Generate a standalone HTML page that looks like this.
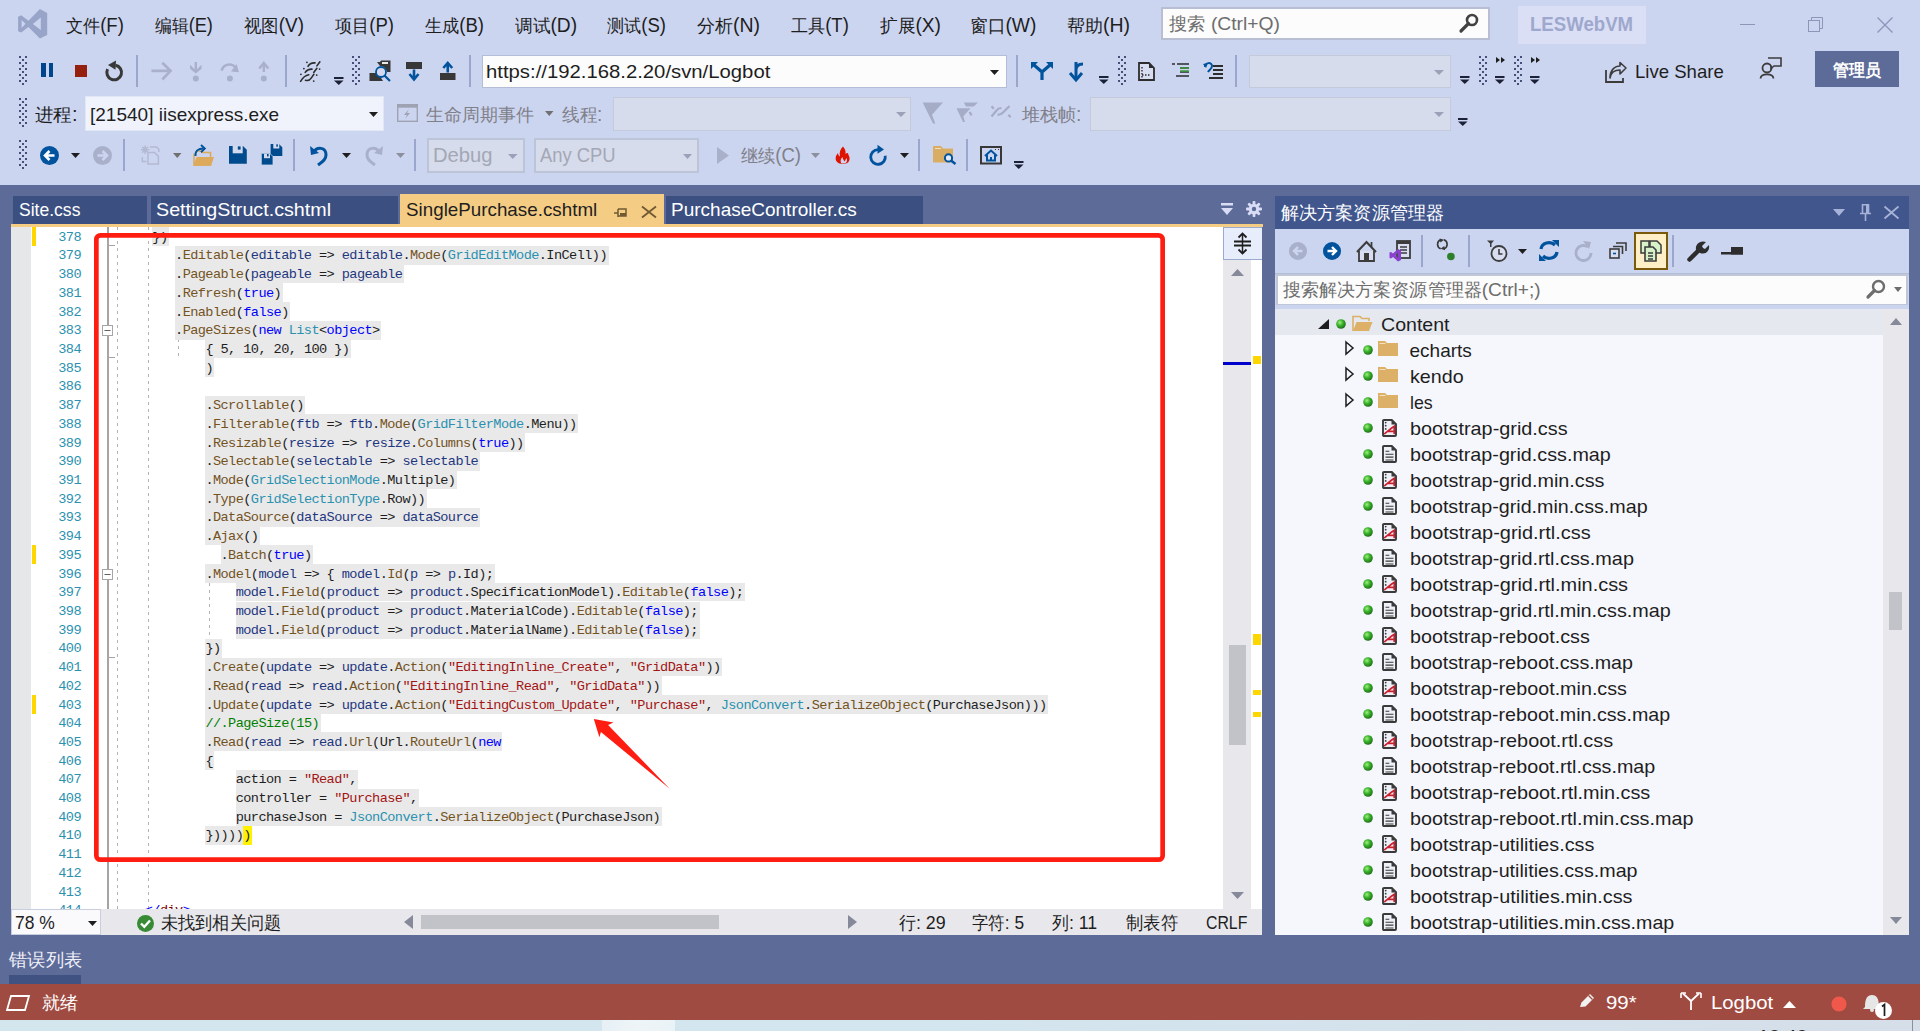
<!DOCTYPE html>
<html><head><meta charset="utf-8">
<style>
*{margin:0;padding:0;box-sizing:border-box}
html,body{width:1920px;height:1031px;overflow:hidden;background:#5D6B99;font-family:"Liberation Sans",sans-serif;position:relative}
.a{position:absolute}
.tx{white-space:pre;transform-origin:0 0}
svg{overflow:visible}
.code{font-family:'Liberation Mono',monospace;font-size:13.6px;line-height:14px;letter-spacing:-0.58px;white-space:pre;color:#1E1E1E}
.ln{color:#2B91AF;text-align:right}
</style></head><body>
<div class="a" style="left:0px;top:0px;width:1920px;height:185px;background:#CCD5F0;"></div>
<svg class="a" style="left:0px;top:0px;" width="50" height="44" viewBox="0 0 50 44"><path d="M39.9 9 L47.2 12.9 L47.2 35 L39.9 38.5 L28.4 27.1 L21.2 32.5 L18.1 31.2 L18.1 16.8 L21.2 15.2 L28.4 20.7 Z M40.8 17.6 L40.8 30 L32.9 24 Z M21.6 19.9 L25.5 23.8 L21.6 27.9 Z" fill="#98A5C9" fill-rule="evenodd"/></svg>
<div class="a tx" style="left:66.00px;top:15.89px;font-size:19.5px;line-height:19.5px;color:#1E1E1E;font-family:'Liberation Sans',sans-serif;font-weight:400;transform:scaleX(0.9500);"><span style="font-size:0.93em">文件</span>(F)</div>
<div class="a tx" style="left:155.00px;top:15.89px;font-size:19.5px;line-height:19.5px;color:#1E1E1E;font-family:'Liberation Sans',sans-serif;font-weight:400;transform:scaleX(0.9344);"><span style="font-size:0.93em">编辑</span>(E)</div>
<div class="a tx" style="left:244.00px;top:15.89px;font-size:19.5px;line-height:19.5px;color:#1E1E1E;font-family:'Liberation Sans',sans-serif;font-weight:400;transform:scaleX(0.9672);"><span style="font-size:0.93em">视图</span>(V)</div>
<div class="a tx" style="left:335.00px;top:15.89px;font-size:19.5px;line-height:19.5px;color:#1E1E1E;font-family:'Liberation Sans',sans-serif;font-weight:400;transform:scaleX(0.9508);"><span style="font-size:0.93em">项目</span>(P)</div>
<div class="a tx" style="left:425.00px;top:15.89px;font-size:19.5px;line-height:19.5px;color:#1E1E1E;font-family:'Liberation Sans',sans-serif;font-weight:400;transform:scaleX(0.9508);"><span style="font-size:0.93em">生成</span>(B)</div>
<div class="a tx" style="left:515.00px;top:15.89px;font-size:19.5px;line-height:19.5px;color:#1E1E1E;font-family:'Liberation Sans',sans-serif;font-weight:400;transform:scaleX(0.9839);"><span style="font-size:0.93em">调试</span>(D)</div>
<div class="a tx" style="left:607.00px;top:15.89px;font-size:19.5px;line-height:19.5px;color:#1E1E1E;font-family:'Liberation Sans',sans-serif;font-weight:400;transform:scaleX(0.9508);"><span style="font-size:0.93em">测试</span>(S)</div>
<div class="a tx" style="left:697.00px;top:15.89px;font-size:19.5px;line-height:19.5px;color:#1E1E1E;font-family:'Liberation Sans',sans-serif;font-weight:400;transform:scaleX(1.0000);"><span style="font-size:0.93em">分析</span>(N)</div>
<div class="a tx" style="left:791.00px;top:15.89px;font-size:19.5px;line-height:19.5px;color:#1E1E1E;font-family:'Liberation Sans',sans-serif;font-weight:400;transform:scaleX(0.9500);"><span style="font-size:0.93em">工具</span>(T)</div>
<div class="a tx" style="left:880.00px;top:15.89px;font-size:19.5px;line-height:19.5px;color:#1E1E1E;font-family:'Liberation Sans',sans-serif;font-weight:400;transform:scaleX(0.9836);"><span style="font-size:0.93em">扩展</span>(X)</div>
<div class="a tx" style="left:970.02px;top:15.89px;font-size:19.5px;line-height:19.5px;color:#1E1E1E;font-family:'Liberation Sans',sans-serif;font-weight:400;transform:scaleX(0.9848);"><span style="font-size:0.93em">窗口</span>(W)</div>
<div class="a tx" style="left:1067.00px;top:15.89px;font-size:19.5px;line-height:19.5px;color:#1E1E1E;font-family:'Liberation Sans',sans-serif;font-weight:400;transform:scaleX(1.0000);"><span style="font-size:0.93em">帮助</span>(H)</div>
<div class="a" style="left:1161px;top:7px;width:329px;height:33px;background:#FCFCFC;border:2px solid #B8BFD2"></div>
<div class="a tx" style="left:1169.00px;top:14.42px;font-size:19px;line-height:19px;color:#6D6D6D;font-family:'Liberation Sans',sans-serif;font-weight:400;transform:scaleX(1.0147);"><span style="font-size:0.93em">搜索</span> (Ctrl+Q)</div>
<svg class="a" style="left:1459px;top:13px;" width="20" height="20" viewBox="0 0 20 20"><circle cx="13" cy="7" r="5" fill="none" stroke="#424242" stroke-width="2.6"/><path d="M9.5 10.5 L2 18" stroke="#424242" stroke-width="3.2" stroke-linecap="round"/></svg>
<div class="a" style="left:1518px;top:6px;width:128px;height:38px;background:#DADFF6;"></div>
<div class="a tx" style="left:1530.35px;top:15.49px;font-size:19.5px;line-height:19.5px;color:#9EA8CC;font-family:'Liberation Sans',sans-serif;font-weight:700;transform:scaleX(0.9547);">LESWebVM</div>
<div class="a" style="left:1740px;top:24px;width:15px;height:1px;background:#8D96B8;"></div>
<svg class="a" style="left:1808px;top:17px;" width="16" height="16" viewBox="0 0 16 16"><rect x="0.5" y="3.5" width="11" height="11" fill="none" stroke="#8D96B8"/><path d="M3.5 3.5 V0.5 H14.5 V11.5 H11.5" fill="none" stroke="#8D96B8"/></svg>
<svg class="a" style="left:1877px;top:17px;" width="16" height="16" viewBox="0 0 16 16"><path d="M0.5 0.5 L15.5 15.5 M15.5 0.5 L0.5 15.5" stroke="#8D96B8" stroke-width="1.4"/></svg>
<svg class="a" style="left:19px;top:56px;" width="8" height="29" viewBox="0 0 8 29"><rect x="0" y="0" width="2" height="2" fill="#474E7A"/><rect x="6" y="0" width="2" height="2" fill="#474E7A"/><rect x="3" y="3" width="2" height="2" fill="#474E7A"/><rect x="0" y="6" width="2" height="2" fill="#474E7A"/><rect x="6" y="6" width="2" height="2" fill="#474E7A"/><rect x="3" y="9" width="2" height="2" fill="#474E7A"/><rect x="0" y="12" width="2" height="2" fill="#474E7A"/><rect x="6" y="12" width="2" height="2" fill="#474E7A"/><rect x="3" y="15" width="2" height="2" fill="#474E7A"/><rect x="0" y="18" width="2" height="2" fill="#474E7A"/><rect x="6" y="18" width="2" height="2" fill="#474E7A"/><rect x="3" y="21" width="2" height="2" fill="#474E7A"/><rect x="0" y="24" width="2" height="2" fill="#474E7A"/><rect x="6" y="24" width="2" height="2" fill="#474E7A"/><rect x="3" y="27" width="2" height="2" fill="#474E7A"/></svg>
<div class="a" style="left:41px;top:63px;width:4.5px;height:14px;background:#00468C;"></div>
<div class="a" style="left:48.5px;top:63px;width:4.5px;height:14px;background:#00468C;"></div>
<div class="a" style="left:75px;top:65px;width:12px;height:12px;background:#962010;"></div>
<svg class="a" style="left:105px;top:59px;" width="20" height="24" viewBox="0 0 20 24"><path d="M10.5 6.25 A7.35 7.35 0 1 1 2.6 10.2" fill="none" stroke="#383838" stroke-width="3"/><path d="M3 6 L11 1.5 L10.5 10.7 Z" fill="#383838"/></svg>
<div class="a" style="left:136px;top:55px;width:2px;height:32px;background:#9AA6CB;"></div>
<svg class="a" style="left:145px;top:55px;" width="30" height="30" viewBox="0 0 30 30"><path d="M6.4 15.9 H25 M17.3 7.8 L25.6 15.9 L17.3 24.5" fill="none" stroke="#A9B0CA" stroke-width="2.6"/></svg>
<svg class="a" style="left:185px;top:55px;" width="22" height="30" viewBox="0 0 22 30"><path d="M10.8 7 V15" stroke="#A9B0CA" stroke-width="2.4"/><path d="M5.8 11.5 L10.8 16.5 L15.8 11.5 L15.8 13.5 L10.8 17.5 L5.8 13.5 Z" fill="#A9B0CA" stroke="#A9B0CA" stroke-width="1.5"/><circle cx="10.8" cy="23.6" r="3" fill="#A9B0CA"/></svg>
<svg class="a" style="left:215px;top:55px;" width="30" height="30" viewBox="0 0 30 30"><path d="M6.5 15.6 C8 11 11.5 9.5 14.6 9.5 C17 9.5 19 10.5 20.5 12.5" fill="none" stroke="#A9B0CA" stroke-width="2.6"/><path d="M21.6 9 L23.9 17.3 L16 16.5 Z" fill="#A9B0CA"/><circle cx="14.9" cy="23.6" r="3" fill="#A9B0CA"/></svg>
<svg class="a" style="left:255px;top:55px;" width="18" height="30" viewBox="0 0 18 30"><path d="M8.8 17 V9" stroke="#A9B0CA" stroke-width="2.4"/><path d="M4.3 13.5 L8.8 8 L13.3 13.5" fill="none" stroke="#A9B0CA" stroke-width="2.6"/><circle cx="8.8" cy="23.6" r="3" fill="#A9B0CA"/></svg>
<div class="a" style="left:285px;top:55px;width:2px;height:32px;background:#9AA6CB;"></div>
<svg class="a" style="left:296px;top:58px;" width="28" height="28" viewBox="0 0 28 28"><g fill="none" stroke="#2D2D2D" stroke-width="1.6" stroke-linecap="round"><path d="M12 8.4 Q14 4.6 19 4.9"/><path d="M9.2 14.4 Q11.5 10.9 16 11.1"/><path d="M4.6 23.4 Q8 17.5 12.8 16.8"/><path d="M20.9 7.9 L23.9 3.8"/><path d="M17.7 14.4 L20.9 10.3"/><path d="M9.5 22.3 Q13 23.3 15.2 20.1 L17.9 16.3"/></g><g fill="#2D2D2D"><circle cx="10.9" cy="4.3" r="0.9"/><circle cx="7.9" cy="10.6" r="0.9"/><circle cx="4.9" cy="16.3" r="0.9"/><circle cx="23.6" cy="11.1" r="0.9"/><circle cx="20.7" cy="17.1" r="0.9"/><circle cx="17.7" cy="23.1" r="0.9"/></g></svg>
<svg class="a" style="left:334px;top:77px;" width="10" height="9" viewBox="0 0 10 9"><rect x="0" y="0" width="9.5" height="2" fill="#1B2137"/><path d="M0 3.5 L9.5 3.5 L4.75 8 Z" fill="#1B2137"/></svg>
<svg class="a" style="left:352px;top:56px;" width="8" height="29" viewBox="0 0 8 29"><rect x="0" y="0" width="2" height="2" fill="#474E7A"/><rect x="6" y="0" width="2" height="2" fill="#474E7A"/><rect x="3" y="3" width="2" height="2" fill="#474E7A"/><rect x="0" y="6" width="2" height="2" fill="#474E7A"/><rect x="6" y="6" width="2" height="2" fill="#474E7A"/><rect x="3" y="9" width="2" height="2" fill="#474E7A"/><rect x="0" y="12" width="2" height="2" fill="#474E7A"/><rect x="6" y="12" width="2" height="2" fill="#474E7A"/><rect x="3" y="15" width="2" height="2" fill="#474E7A"/><rect x="0" y="18" width="2" height="2" fill="#474E7A"/><rect x="6" y="18" width="2" height="2" fill="#474E7A"/><rect x="3" y="21" width="2" height="2" fill="#474E7A"/><rect x="0" y="24" width="2" height="2" fill="#474E7A"/><rect x="6" y="24" width="2" height="2" fill="#474E7A"/><rect x="3" y="27" width="2" height="2" fill="#474E7A"/></svg>
<svg class="a" style="left:369px;top:60px;" width="23" height="23" viewBox="0 0 23 23"><path d="M0.5 13 H9 L14 21 H0.5 Z" fill="#383838"/><path d="M8 2 H11 L12 0.5 H21.5 V12 L18 12 C17 8 14 6 11 6 Z" fill="#383838"/><rect x="13" y="2" width="6" height="2" fill="#E8E8E8"/><circle cx="12" cy="12" r="5" fill="#D5D8EE" stroke="#00539C" stroke-width="1.8"/><path d="M15.5 15.5 L21 21" stroke="#00539C" stroke-width="2.2"/></svg>
<svg class="a" style="left:406px;top:62px;" width="16" height="19" viewBox="0 0 16 19"><rect x="0" y="0" width="16" height="7" fill="#383838"/><path d="M8 7.5 V17 M3.5 12 L8 17.5 L12.5 12" fill="none" stroke="#00539C" stroke-width="2.6"/></svg>
<svg class="a" style="left:440px;top:62px;" width="16" height="18" viewBox="0 0 16 18"><rect x="0" y="11" width="15.5" height="7" fill="#383838"/><path d="M7.75 10.5 V1.5 M3.3 6 L7.75 1 L12.2 6" fill="none" stroke="#00539C" stroke-width="2.6"/></svg>
<div class="a" style="left:469px;top:55px;width:2px;height:32px;background:#9AA6CB;"></div>
<div class="a" style="left:482px;top:55px;width:525px;height:33px;background:#FCFCFC;border:1px solid #B4BCD6"></div>
<div class="a tx" style="left:485.90px;top:62.84px;font-size:18.5px;line-height:18.5px;color:#1E1E1E;font-family:'Liberation Sans',sans-serif;font-weight:400;transform:scaleX(1.0969);">https://192.168.2.20/svn/Logbot</div>
<svg class="a" style="left:990px;top:70px;" width="9" height="5" viewBox="0 0 9 5"><path d="M0 0 L9 0 L4.5 5 Z" fill="#1E1E1E"/></svg>
<div class="a" style="left:1016px;top:55px;width:2px;height:32px;background:#9AA6CB;"></div>
<svg class="a" style="left:1031px;top:62px;" width="22" height="19" viewBox="0 0 22 19"><path d="M11 18 V10 L3 3 M11 10 L19 3" fill="none" stroke="#00539C" stroke-width="3.2"/><path d="M0 0 H7 L0 7 Z M22 0 H15 L22 7 Z" fill="#00539C"/></svg>
<svg class="a" style="left:1069px;top:61px;" width="16" height="21" viewBox="0 0 16 21"><path d="M7 1 V18 M7 9 C7 4 10 3 14 3" fill="none" stroke="#00539C" stroke-width="3"/><path d="M1 12 L7 19 L13 12" fill="none" stroke="#00539C" stroke-width="3"/></svg>
<svg class="a" style="left:1099px;top:76px;" width="10" height="9" viewBox="0 0 10 9"><rect x="0" y="0" width="9.5" height="2" fill="#1B2137"/><path d="M0 3.5 L9.5 3.5 L4.75 8 Z" fill="#1B2137"/></svg>
<svg class="a" style="left:1118px;top:56px;" width="8" height="29" viewBox="0 0 8 29"><rect x="0" y="0" width="2" height="2" fill="#474E7A"/><rect x="6" y="0" width="2" height="2" fill="#474E7A"/><rect x="3" y="3" width="2" height="2" fill="#474E7A"/><rect x="0" y="6" width="2" height="2" fill="#474E7A"/><rect x="6" y="6" width="2" height="2" fill="#474E7A"/><rect x="3" y="9" width="2" height="2" fill="#474E7A"/><rect x="0" y="12" width="2" height="2" fill="#474E7A"/><rect x="6" y="12" width="2" height="2" fill="#474E7A"/><rect x="3" y="15" width="2" height="2" fill="#474E7A"/><rect x="0" y="18" width="2" height="2" fill="#474E7A"/><rect x="6" y="18" width="2" height="2" fill="#474E7A"/><rect x="3" y="21" width="2" height="2" fill="#474E7A"/><rect x="0" y="24" width="2" height="2" fill="#474E7A"/><rect x="6" y="24" width="2" height="2" fill="#474E7A"/><rect x="3" y="27" width="2" height="2" fill="#474E7A"/></svg>
<svg class="a" style="left:1138px;top:62px;" width="17" height="19" viewBox="0 0 17 19"><path d="M1 1 H11 L16 6 V18 H1 Z" fill="#D9DDF0" stroke="#2D2D2D" stroke-width="1.8"/><path d="M11 1 L16 6 H11Z" fill="#2D2D2D"/><path d="M4 5 V16 M4 13 H13" stroke="#2D2D2D" stroke-width="1.4" stroke-dasharray="1.5 1.5"/></svg>
<svg class="a" style="left:1172px;top:63px;" width="17" height="15" viewBox="0 0 17 15"><path d="M0 1 H3 M5 1 H17 M8 5 H17 M8 9 H17 M4 13 H17" stroke="#2D2D2D" stroke-width="1.6"/><path d="M8 5 H17 M8 8 H17" stroke="#3C9A3C" stroke-width="1.6"/></svg>
<svg class="a" style="left:1203px;top:62px;" width="20" height="19" viewBox="0 0 20 19"><path d="M2 5 C2 0 9 0 9 4 C9 7 6 8 5 10" fill="none" stroke="#00539C" stroke-width="2"/><path d="M0 2 L3 6 L5 1Z" fill="#00539C"/><path d="M10 4 H20 M10 8 H20 M10 12 H20 M6 16 H20" stroke="#2D2D2D" stroke-width="1.8"/></svg>
<div class="a" style="left:1235px;top:55px;width:2px;height:32px;background:#9AA6CB;"></div>
<div class="a" style="left:1249px;top:55px;width:202px;height:33px;background:#D6DCEB;border:1px solid #C3CADC"></div>
<svg class="a" style="left:1434px;top:70px;" width="10" height="5" viewBox="0 0 10 5"><path d="M0 0 L10 0 L5.0 5 Z" fill="#9BA1B8"/></svg>
<svg class="a" style="left:1460px;top:76px;" width="10" height="9" viewBox="0 0 10 9"><rect x="0" y="0" width="9.5" height="2" fill="#1B2137"/><path d="M0 3.5 L9.5 3.5 L4.75 8 Z" fill="#1B2137"/></svg>
<svg class="a" style="left:1479px;top:56px;" width="8" height="29" viewBox="0 0 8 29"><rect x="0" y="0" width="2" height="2" fill="#474E7A"/><rect x="6" y="0" width="2" height="2" fill="#474E7A"/><rect x="3" y="3" width="2" height="2" fill="#474E7A"/><rect x="0" y="6" width="2" height="2" fill="#474E7A"/><rect x="6" y="6" width="2" height="2" fill="#474E7A"/><rect x="3" y="9" width="2" height="2" fill="#474E7A"/><rect x="0" y="12" width="2" height="2" fill="#474E7A"/><rect x="6" y="12" width="2" height="2" fill="#474E7A"/><rect x="3" y="15" width="2" height="2" fill="#474E7A"/><rect x="0" y="18" width="2" height="2" fill="#474E7A"/><rect x="6" y="18" width="2" height="2" fill="#474E7A"/><rect x="3" y="21" width="2" height="2" fill="#474E7A"/><rect x="0" y="24" width="2" height="2" fill="#474E7A"/><rect x="6" y="24" width="2" height="2" fill="#474E7A"/><rect x="3" y="27" width="2" height="2" fill="#474E7A"/></svg>
<svg class="a" style="left:1496px;top:57px;" width="10" height="6" viewBox="0 0 10 6"><path d="M0 0 L4 3 L0 6Z M5 0 L9 3 L5 6Z" fill="#1E1E1E"/></svg>
<svg class="a" style="left:1495px;top:76px;" width="10" height="9" viewBox="0 0 10 9"><rect x="0" y="0" width="9.5" height="2" fill="#1B2137"/><path d="M0 3.5 L9.5 3.5 L4.75 8 Z" fill="#1B2137"/></svg>
<svg class="a" style="left:1514px;top:56px;" width="8" height="29" viewBox="0 0 8 29"><rect x="0" y="0" width="2" height="2" fill="#474E7A"/><rect x="6" y="0" width="2" height="2" fill="#474E7A"/><rect x="3" y="3" width="2" height="2" fill="#474E7A"/><rect x="0" y="6" width="2" height="2" fill="#474E7A"/><rect x="6" y="6" width="2" height="2" fill="#474E7A"/><rect x="3" y="9" width="2" height="2" fill="#474E7A"/><rect x="0" y="12" width="2" height="2" fill="#474E7A"/><rect x="6" y="12" width="2" height="2" fill="#474E7A"/><rect x="3" y="15" width="2" height="2" fill="#474E7A"/><rect x="0" y="18" width="2" height="2" fill="#474E7A"/><rect x="6" y="18" width="2" height="2" fill="#474E7A"/><rect x="3" y="21" width="2" height="2" fill="#474E7A"/><rect x="0" y="24" width="2" height="2" fill="#474E7A"/><rect x="6" y="24" width="2" height="2" fill="#474E7A"/><rect x="3" y="27" width="2" height="2" fill="#474E7A"/></svg>
<svg class="a" style="left:1531px;top:57px;" width="10" height="6" viewBox="0 0 10 6"><path d="M0 0 L4 3 L0 6Z M5 0 L9 3 L5 6Z" fill="#1E1E1E"/></svg>
<svg class="a" style="left:1530px;top:76px;" width="10" height="9" viewBox="0 0 10 9"><rect x="0" y="0" width="9.5" height="2" fill="#1B2137"/><path d="M0 3.5 L9.5 3.5 L4.75 8 Z" fill="#1B2137"/></svg>
<svg class="a" style="left:1605px;top:62px;" width="23" height="21" viewBox="0 0 23 21"><path d="M1 8 V20 H18 V16" fill="none" stroke="#3C3C3C" stroke-width="1.8"/><path d="M5 16 C6 10 10 8 15 8 V12 L21 6 L15 0.5 V4 C9 4 5 9 5 16 Z" fill="none" stroke="#3C3C3C" stroke-width="1.6" stroke-linejoin="round"/></svg>
<div class="a tx" style="left:1635.02px;top:62.42px;font-size:19px;line-height:19px;color:#1E1E1E;font-family:'Liberation Sans',sans-serif;font-weight:400;transform:scaleX(0.9775);">Live Share</div>
<svg class="a" style="left:1760px;top:57px;" width="22" height="22" viewBox="0 0 22 22"><circle cx="7" cy="11" r="4.5" fill="none" stroke="#3C3C3C" stroke-width="1.8"/><path d="M0.5 21.5 C1 16 13 16 13.5 21.5" fill="none" stroke="#3C3C3C" stroke-width="1.8"/><path d="M8 1 H21 V9 H14 L11 11.5 V9" fill="none" stroke="#3C3C3C" stroke-width="1.6"/></svg>
<div class="a" style="left:1815px;top:51px;width:84px;height:36px;background:#5D6B99;"></div>
<div class="a tx" style="left:1833.00px;top:60.84px;font-size:18.5px;line-height:18.5px;color:#FFFFFF;font-family:'Liberation Sans',sans-serif;font-weight:700;transform:scaleX(0.9412);"><span style="font-size:0.93em">管理员</span></div>
<svg class="a" style="left:19px;top:98px;" width="8" height="29" viewBox="0 0 8 29"><rect x="0" y="0" width="2" height="2" fill="#474E7A"/><rect x="6" y="0" width="2" height="2" fill="#474E7A"/><rect x="3" y="3" width="2" height="2" fill="#474E7A"/><rect x="0" y="6" width="2" height="2" fill="#474E7A"/><rect x="6" y="6" width="2" height="2" fill="#474E7A"/><rect x="3" y="9" width="2" height="2" fill="#474E7A"/><rect x="0" y="12" width="2" height="2" fill="#474E7A"/><rect x="6" y="12" width="2" height="2" fill="#474E7A"/><rect x="3" y="15" width="2" height="2" fill="#474E7A"/><rect x="0" y="18" width="2" height="2" fill="#474E7A"/><rect x="6" y="18" width="2" height="2" fill="#474E7A"/><rect x="3" y="21" width="2" height="2" fill="#474E7A"/><rect x="0" y="24" width="2" height="2" fill="#474E7A"/><rect x="6" y="24" width="2" height="2" fill="#474E7A"/><rect x="3" y="27" width="2" height="2" fill="#474E7A"/></svg>
<div class="a tx" style="left:35.00px;top:104.99px;font-size:19.5px;line-height:19.5px;color:#1E1E1E;font-family:'Liberation Sans',sans-serif;font-weight:400;transform:scaleX(1.0250);"><span style="font-size:0.93em">进程</span>:</div>
<div class="a" style="left:85px;top:96px;width:299px;height:35px;background:#F0F3FC;border:1px solid #E2E7F6"></div>
<div class="a tx" style="left:89.97px;top:105.84px;font-size:18.5px;line-height:18.5px;color:#1E1E1E;font-family:'Liberation Sans',sans-serif;font-weight:400;transform:scaleX(1.0273);">[21540] iisexpress.exe</div>
<svg class="a" style="left:369px;top:112px;" width="9" height="5" viewBox="0 0 9 5"><path d="M0 0 L9 0 L4.5 5 Z" fill="#1E1E1E"/></svg>
<svg class="a" style="left:397px;top:104px;" width="21" height="18" viewBox="0 0 21 18"><rect x="0.7" y="0.7" width="19.6" height="16.6" fill="none" stroke="#9EA2B2" stroke-width="1.4"/><rect x="0.7" y="0.7" width="19.6" height="3" fill="#9EA2B2"/><path d="M12 5 L7 11 H10 L8 15 L13 9 H10 Z" fill="#9EA2B2"/></svg>
<div class="a tx" style="left:426.00px;top:104.99px;font-size:19.5px;line-height:19.5px;color:#7F8089;font-family:'Liberation Sans',sans-serif;font-weight:400;transform:scaleX(1.0000);"><span style="font-size:0.93em">生命周期事件</span></div>
<svg class="a" style="left:544.5px;top:111px;" width="8.5" height="5" viewBox="0 0 8.5 5"><path d="M0 0 L8.5 0 L4.25 5 Z" fill="#707070"/></svg>
<div class="a tx" style="left:562.00px;top:104.99px;font-size:19.5px;line-height:19.5px;color:#7F8089;font-family:'Liberation Sans',sans-serif;font-weight:400;transform:scaleX(0.9750);"><span style="font-size:0.93em">线程</span>:</div>
<div class="a" style="left:613px;top:97px;width:298px;height:34px;background:#D6DCEB;border:1px solid #C3CADC"></div>
<svg class="a" style="left:896px;top:112px;" width="10" height="5" viewBox="0 0 10 5"><path d="M0 0 L10 0 L5.0 5 Z" fill="#9BA1B8"/></svg>
<svg class="a" style="left:918px;top:98px;" width="100" height="30" viewBox="0 0 100 30"><g fill="#A5ACC5"><path d="M4.7 4.4 H25 L14 16.7 L17.3 25.5 H15 Z"/><path d="M45.8 4.4 H59.9 L55.7 8.6 H48 Z"/><path d="M38.5 10.2 H52.6 L45.3 18.2 L47 24 H45 Z"/></g><g fill="none" stroke="#A5ACC5" stroke-width="2.2"><path d="M51.6 14 L53.6 17.4"/><path d="M73.5 18.5 L78.5 12.5 Q80 10.2 83.5 10"/><path d="M79.5 16.8 Q83 16.8 85 14.5 L91.5 8"/><path d="M73.5 8.2 L75.8 10.8"/><path d="M90.5 16.8 L92.6 19.3"/></g></svg>
<div class="a tx" style="left:1022.00px;top:104.99px;font-size:19.5px;line-height:19.5px;color:#7F8089;font-family:'Liberation Sans',sans-serif;font-weight:400;transform:scaleX(1.0000);"><span style="font-size:0.93em">堆栈帧</span>:</div>
<div class="a" style="left:1090px;top:97px;width:361px;height:34px;background:#D6DCEB;border:1px solid #C3CADC"></div>
<svg class="a" style="left:1434px;top:112px;" width="10" height="5" viewBox="0 0 10 5"><path d="M0 0 L10 0 L5.0 5 Z" fill="#9BA1B8"/></svg>
<svg class="a" style="left:1458px;top:118px;" width="10" height="9" viewBox="0 0 10 9"><rect x="0" y="0" width="9.5" height="2" fill="#1B2137"/><path d="M0 3.5 L9.5 3.5 L4.75 8 Z" fill="#1B2137"/></svg>
<svg class="a" style="left:19px;top:140px;" width="8" height="29" viewBox="0 0 8 29"><rect x="0" y="0" width="2" height="2" fill="#474E7A"/><rect x="6" y="0" width="2" height="2" fill="#474E7A"/><rect x="3" y="3" width="2" height="2" fill="#474E7A"/><rect x="0" y="6" width="2" height="2" fill="#474E7A"/><rect x="6" y="6" width="2" height="2" fill="#474E7A"/><rect x="3" y="9" width="2" height="2" fill="#474E7A"/><rect x="0" y="12" width="2" height="2" fill="#474E7A"/><rect x="6" y="12" width="2" height="2" fill="#474E7A"/><rect x="3" y="15" width="2" height="2" fill="#474E7A"/><rect x="0" y="18" width="2" height="2" fill="#474E7A"/><rect x="6" y="18" width="2" height="2" fill="#474E7A"/><rect x="3" y="21" width="2" height="2" fill="#474E7A"/><rect x="0" y="24" width="2" height="2" fill="#474E7A"/><rect x="6" y="24" width="2" height="2" fill="#474E7A"/><rect x="3" y="27" width="2" height="2" fill="#474E7A"/></svg>
<svg class="a" style="left:40px;top:146px;" width="19" height="19" viewBox="0 0 19 19"><circle cx="9.5" cy="9.5" r="9.5" fill="#00539C"/><path d="M14.5 9.5 H6 M9.5 5 L5 9.5 L9.5 14" fill="none" stroke="#FFFFFF" stroke-width="2.6"/></svg>
<svg class="a" style="left:71px;top:153px;" width="9" height="5" viewBox="0 0 9 5"><path d="M0 0 L9 0 L4.5 5 Z" fill="#1E1E1E"/></svg>
<svg class="a" style="left:93px;top:146px;" width="19" height="19" viewBox="0 0 19 19"><circle cx="9.5" cy="9.5" r="9.5" fill="#A9B0CA"/><path d="M4.5 9.5 H13 M9.5 5 L14 9.5 L9.5 14" fill="none" stroke="#CCD5F0" stroke-width="2.6"/></svg>
<div class="a" style="left:123px;top:139px;width:2px;height:32px;background:#9AA6CB;"></div>
<svg class="a" style="left:135px;top:140px;" width="30" height="30" viewBox="0 0 30 30"><g fill="none" stroke="#B3B9D0" stroke-width="1.5"><path d="M10.1 5.5 V13.9 M5.9 9.7 H14.3 M7.1 6.7 L13.1 12.7 M13.1 6.7 L7.1 12.7"/><path d="M15 7 H21.5 L23.8 9.3 V12"/><path d="M7.3 17 V21.5 H11.5"/><path d="M13 12.5 H19.5 L23.4 16.4 V23.9 H13 Z"/></g></svg>
<svg class="a" style="left:173.3px;top:153px;" width="8.5" height="5" viewBox="0 0 8.5 5"><path d="M0 0 L8.5 0 L4.25 5 Z" fill="#707070"/></svg>
<svg class="a" style="left:193px;top:144px;" width="22" height="23" viewBox="0 0 22 23"><path d="M1 9.5 V21 H17.5 V8.5 H9.5 L8 7 H3" fill="none" stroke="#DCAA5A" stroke-width="1.6"/><path d="M0.5 21.7 L3.5 13 H21 L18 21.7 Z" fill="#DCAA5A"/><path d="M2.5 12 C2 7 5 4.5 10.5 4.5" fill="none" stroke="#00539C" stroke-width="1.9"/><path d="M8 1 L11.8 4.6 L8 8.2" fill="none" stroke="#00539C" stroke-width="1.9"/></svg>
<svg class="a" style="left:229px;top:146px;" width="18" height="18" viewBox="0 0 18 18"><path d="M0 0 H14 L17.8 3.8 V17.8 H0 Z" fill="#004B8D"/><rect x="3.7" y="0" width="10" height="7.3" fill="#D5D9EE"/><rect x="8.8" y="0.4" width="2.8" height="3.2" fill="#004B8D"/></svg>
<svg class="a" style="left:261px;top:144px;" width="22" height="22" viewBox="0 0 22 22"><path d="M9.6 0 H18 L21.3 3.3 V12.1 H9.6 Z" fill="#004B8D"/><rect x="12.3" y="0" width="6" height="4.5" fill="#D5D9EE"/><rect x="15.3" y="0.3" width="1.6" height="2.4" fill="#004B8D"/><path d="M0.3 9.3 H8.8 L12 12.5 V21 H0.3 Z" fill="#004B8D" stroke="#CCD5F0" stroke-width="0.8"/><rect x="3" y="9.7" width="6" height="4.5" fill="#D5D9EE"/><rect x="6" y="10" width="1.6" height="2.4" fill="#004B8D"/></svg>
<div class="a" style="left:293px;top:139px;width:2px;height:32px;background:#9AA6CB;"></div>
<svg class="a" style="left:310px;top:144px;" width="20" height="22" viewBox="0 0 20 22"><path d="M3 9 C7 2 16 3 16 11 C16 16 12 18 8 21" fill="none" stroke="#00539C" stroke-width="3"/><path d="M0 2 L1 11 L9 9 Z" fill="#00539C"/></svg>
<svg class="a" style="left:342px;top:153px;" width="9" height="5" viewBox="0 0 9 5"><path d="M0 0 L9 0 L4.5 5 Z" fill="#1E1E1E"/></svg>
<svg class="a" style="left:364px;top:144px;" width="19" height="22" viewBox="0 0 19 22"><path d="M16 9 C12 2 3 3 3 11 C3 16 7 18 11 21" fill="none" stroke="#A9B0CA" stroke-width="3"/><path d="M19 2 L18 11 L10 9 Z" fill="#A9B0CA"/></svg>
<svg class="a" style="left:396px;top:153px;" width="9" height="5" viewBox="0 0 9 5"><path d="M0 0 L9 0 L4.5 5 Z" fill="#8C8F9C"/></svg>
<div class="a" style="left:414px;top:139px;width:2px;height:32px;background:#9AA6CB;"></div>
<div class="a" style="left:427px;top:138px;width:98px;height:35px;background:#D6DCEB;border:2px solid #BCC4D8"></div>
<div class="a tx" style="left:432.96px;top:146.49px;font-size:19.5px;line-height:19.5px;color:#A4A7B5;font-family:'Liberation Sans',sans-serif;font-weight:400;transform:scaleX(1.0364);">Debug</div>
<svg class="a" style="left:508px;top:154px;" width="9.5" height="5" viewBox="0 0 9.5 5"><path d="M0 0 L9.5 0 L4.75 5 Z" fill="#9BA1B8"/></svg>
<div class="a" style="left:534px;top:138px;width:165px;height:35px;background:#D6DCEB;border:2px solid #BCC4D8"></div>
<div class="a tx" style="left:540.00px;top:146.49px;font-size:19.5px;line-height:19.5px;color:#A4A7B5;font-family:'Liberation Sans',sans-serif;font-weight:400;transform:scaleX(0.9430);">Any CPU</div>
<svg class="a" style="left:683px;top:154px;" width="9" height="5" viewBox="0 0 9 5"><path d="M0 0 L9 0 L4.5 5 Z" fill="#9BA1B8"/></svg>
<svg class="a" style="left:717px;top:147px;" width="12" height="17" viewBox="0 0 12 17"><path d="M0 0 L12 8.5 L0 17 Z" fill="#A9B0CA"/></svg>
<div class="a tx" style="left:741.00px;top:146.49px;font-size:19.5px;line-height:19.5px;color:#7F8089;font-family:'Liberation Sans',sans-serif;font-weight:400;transform:scaleX(0.9516);"><span style="font-size:0.93em">继续</span>(C)</div>
<svg class="a" style="left:811px;top:153px;" width="9" height="5" viewBox="0 0 9 5"><path d="M0 0 L9 0 L4.5 5 Z" fill="#8C8F9C"/></svg>
<svg class="a" style="left:835px;top:146px;" width="16" height="19" viewBox="0 0 16 19"><path d="M8 0.5 C10 3 11 5 10.5 8 C12 7 13 6 13.5 9 C15 11 15 14 13.5 16 C12 17.5 10 18 8 18 C5 18 2 17 1 14.5 C0 12 1 9 3 7 C3 9 4 10 5 10.5 C4 7 5 3 8 0.5 Z" fill="#E01200"/><path d="M6.5 17.5 C5 15.5 5.5 13 7.5 11 C7.5 13 9 14 9.5 15.5 C10.5 14 11 13 11.5 12 C12.5 14 12 16.5 10 17.5 Z" fill="#CCD5F0"/></svg>
<svg class="a" style="left:868px;top:144px;" width="20" height="23" viewBox="0 0 20 23"><path d="M10 5.7 A7.3 7.3 0 1 0 17.2 11.7" fill="none" stroke="#00539C" stroke-width="2.8"/><path d="M9.5 0.7 L16 5.5 L9.5 9.8 Z" fill="#00539C"/></svg>
<svg class="a" style="left:900px;top:152.6px;" width="9" height="5" viewBox="0 0 9 5"><path d="M0 0 L9 0 L4.5 5 Z" fill="#1E1E1E"/></svg>
<div class="a" style="left:918px;top:139px;width:2px;height:32px;background:#9AA6CB;"></div>
<svg class="a" style="left:933px;top:146px;" width="23" height="18" viewBox="0 0 23 18"><path d="M0 1 Q0 0 1 0 H8 L10 2.5 H20 V16.5 H0 Z" fill="#D9AD64"/><path d="M2 2 H8 V3 H2 Z" fill="#F1E0BE"/><circle cx="15.5" cy="11.9" r="3.6" fill="#E3EAF8" stroke="#00539C" stroke-width="2"/><path d="M18 14.5 L22.5 18" stroke="#00539C" stroke-width="2.4"/></svg>
<div class="a" style="left:966px;top:139px;width:2px;height:32px;background:#9AA6CB;"></div>
<svg class="a" style="left:980px;top:146px;" width="22" height="18" viewBox="0 0 22 18"><rect x="1" y="1" width="20" height="16.5" fill="none" stroke="#383838" stroke-width="2"/><path d="M5 10 L11 4.5 L17 10" fill="none" stroke="#00539C" stroke-width="2"/><path d="M7 9 V14.5 H15 V9" fill="none" stroke="#00539C" stroke-width="2"/><rect x="10" y="11" width="2" height="3.5" fill="#00539C"/><path d="M15 3.5 H16 M18 3.5 H19" stroke="#383838" stroke-width="1.2"/></svg>
<svg class="a" style="left:1014px;top:161px;" width="10" height="9" viewBox="0 0 10 9"><rect x="0" y="0" width="9.5" height="2" fill="#1B2137"/><path d="M0 3.5 L9.5 3.5 L4.75 8 Z" fill="#1B2137"/></svg>
<div class="a" style="left:13px;top:196px;width:134px;height:28px;background:#3B4F81;"></div>
<div class="a tx" style="left:19.08px;top:199.72px;font-size:19px;line-height:19px;color:#FFFFFF;font-family:'Liberation Sans',sans-serif;font-weight:400;transform:scaleX(0.9231);">Site.css</div>
<div class="a" style="left:151px;top:196px;width:247px;height:28px;background:#3B4F81;"></div>
<div class="a tx" style="left:155.96px;top:199.72px;font-size:19px;line-height:19px;color:#FFFFFF;font-family:'Liberation Sans',sans-serif;font-weight:400;transform:scaleX(1.0359);">SettingStruct.cshtml</div>
<div class="a" style="left:400px;top:194px;width:264px;height:30px;background:#F5CC84;"></div>
<div class="a tx" style="left:406.01px;top:200.42px;font-size:19px;line-height:19px;color:#1E1E1E;font-family:'Liberation Sans',sans-serif;font-weight:400;transform:scaleX(0.9895);">SinglePurchase.cshtml</div>
<svg class="a" style="left:614px;top:208px;" width="13" height="10" viewBox="0 0 13 10"><path d="M0 5 H4 M4 1 V9 M4 1 H12 V8 H4" fill="none" stroke="#6F5A32" stroke-width="1.5"/><rect x="6" y="5" width="6" height="3" fill="#6F5A32"/></svg>
<svg class="a" style="left:641px;top:206px;" width="16" height="12" viewBox="0 0 16 12"><path d="M1 0.5 L15 11.5 M15 0.5 L1 11.5" stroke="#6F5A32" stroke-width="1.8"/></svg>
<div class="a" style="left:666px;top:196px;width:257px;height:28px;background:#3B4F81;"></div>
<div class="a tx" style="left:671.00px;top:199.72px;font-size:19px;line-height:19px;color:#FFFFFF;font-family:'Liberation Sans',sans-serif;font-weight:400;transform:scaleX(1.0000);">PurchaseController.cs</div>
<svg class="a" style="left:1221px;top:203px;" width="12" height="12" viewBox="0 0 12 12"><rect x="0" y="0" width="12" height="2.5" fill="#D8DDF5"/><path d="M0 5 H12 L6 12 Z" fill="#D8DDF5"/></svg>
<svg class="a" style="left:1246px;top:201px;" width="16" height="16" viewBox="0 0 16 16"><g fill="#D8DDF5"><circle cx="8" cy="8" r="5.2"/><rect x="6.6" y="0" width="2.8" height="16" rx="0.8"/><rect x="0" y="6.6" width="16" height="2.8" rx="0.8"/><rect x="6.6" y="0" width="2.8" height="16" rx="0.8" transform="rotate(45 8 8)"/><rect x="6.6" y="0" width="2.8" height="16" rx="0.8" transform="rotate(-45 8 8)"/></g><circle cx="8" cy="8" r="2.2" fill="#5D6B99"/></svg>
<div class="a" style="left:11px;top:224px;width:1252px;height:3px;background:#F5CC84;"></div>
<div class="a" style="left:11px;top:227px;width:1251px;height:682px;background:#FFFFFF;"></div>
<div class="a" style="left:11px;top:227px;width:20px;height:682px;background:#E6E7E8;"></div>
<div class="a" style="left:32px;top:227px;width:4px;height:19px;background:#FFD700;"></div>
<div class="a" style="left:32px;top:545px;width:4px;height:19px;background:#FFD700;"></div>
<div class="a" style="left:32px;top:695px;width:4px;height:19px;background:#FFD700;"></div>
<div class="a code ln" style="left:40px;top:230.77px;width:41px">378</div>
<div class="a code ln" style="left:40px;top:249.48px;width:41px">379</div>
<div class="a code ln" style="left:40px;top:268.19px;width:41px">380</div>
<div class="a code ln" style="left:40px;top:286.90px;width:41px">381</div>
<div class="a code ln" style="left:40px;top:305.61px;width:41px">382</div>
<div class="a code ln" style="left:40px;top:324.32px;width:41px">383</div>
<div class="a code ln" style="left:40px;top:343.03px;width:41px">384</div>
<div class="a code ln" style="left:40px;top:361.74px;width:41px">385</div>
<div class="a code ln" style="left:40px;top:380.45px;width:41px">386</div>
<div class="a code ln" style="left:40px;top:399.16px;width:41px">387</div>
<div class="a code ln" style="left:40px;top:417.87px;width:41px">388</div>
<div class="a code ln" style="left:40px;top:436.58px;width:41px">389</div>
<div class="a code ln" style="left:40px;top:455.29px;width:41px">390</div>
<div class="a code ln" style="left:40px;top:474.00px;width:41px">391</div>
<div class="a code ln" style="left:40px;top:492.71px;width:41px">392</div>
<div class="a code ln" style="left:40px;top:511.42px;width:41px">393</div>
<div class="a code ln" style="left:40px;top:530.13px;width:41px">394</div>
<div class="a code ln" style="left:40px;top:548.84px;width:41px">395</div>
<div class="a code ln" style="left:40px;top:567.55px;width:41px">396</div>
<div class="a code ln" style="left:40px;top:586.26px;width:41px">397</div>
<div class="a code ln" style="left:40px;top:604.97px;width:41px">398</div>
<div class="a code ln" style="left:40px;top:623.68px;width:41px">399</div>
<div class="a code ln" style="left:40px;top:642.39px;width:41px">400</div>
<div class="a code ln" style="left:40px;top:661.10px;width:41px">401</div>
<div class="a code ln" style="left:40px;top:679.81px;width:41px">402</div>
<div class="a code ln" style="left:40px;top:698.52px;width:41px">403</div>
<div class="a code ln" style="left:40px;top:717.23px;width:41px">404</div>
<div class="a code ln" style="left:40px;top:735.94px;width:41px">405</div>
<div class="a code ln" style="left:40px;top:754.65px;width:41px">406</div>
<div class="a code ln" style="left:40px;top:773.36px;width:41px">407</div>
<div class="a code ln" style="left:40px;top:792.07px;width:41px">408</div>
<div class="a code ln" style="left:40px;top:810.78px;width:41px">409</div>
<div class="a code ln" style="left:40px;top:829.49px;width:41px">410</div>
<div class="a code ln" style="left:40px;top:848.20px;width:41px">411</div>
<div class="a code ln" style="left:40px;top:866.91px;width:41px">412</div>
<div class="a code ln" style="left:40px;top:885.62px;width:41px">413</div>
<div class="a code ln" style="left:40px;top:904.33px;width:41px">414</div>
<div class="a" style="left:107px;top:227px;width:1.5px;height:682px;background:#A5A5A5;"></div>
<div class="a" style="left:107px;top:245px;width:8px;height:1.3px;background:#A5A5A5;"></div>
<div class="a" style="left:107px;top:357px;width:8px;height:1.3px;background:#A5A5A5;"></div>
<div class="a" style="left:107px;top:657px;width:8px;height:1.3px;background:#A5A5A5;"></div>
<svg class="a" style="left:102px;top:325px;" width="11" height="11" viewBox="0 0 11 11"><rect x="0.5" y="0.5" width="10" height="10" fill="#FFFFFF" stroke="#A5A5A5"/><path d="M2.5 5.5 H8.5" stroke="#606060" stroke-width="1"/></svg>
<svg class="a" style="left:102px;top:569px;" width="11" height="11" viewBox="0 0 11 11"><rect x="0.5" y="0.5" width="10" height="10" fill="#FFFFFF" stroke="#A5A5A5"/><path d="M2.5 5.5 H8.5" stroke="#606060" stroke-width="1"/></svg>
<div class="a" style="left:117px;top:227px;width:1px;height:682px;background-image:linear-gradient(#B4B4B4 50%,transparent 50%);background-size:1px 7px"></div>
<div class="a" style="left:148px;top:227px;width:1px;height:682px;background-image:linear-gradient(#B4B4B4 50%,transparent 50%);background-size:1px 7px"></div>
<div class="a" style="left:178px;top:339px;width:1px;height:19px;background-image:linear-gradient(#B4B4B4 50%,transparent 50%);background-size:1px 7px"></div>
<div class="a" style="left:209px;top:583px;width:1px;height:58px;background-image:linear-gradient(#B4B4B4 50%,transparent 50%);background-size:1px 7px"></div>
<div class="a" style="left:152.32px;top:227.3px;width:16.66px;height:18.7px;background:#E9E9E9;"></div>
<div class="a code" style="left:152.32px;top:230.77px"><span style="color:#1E1E1E">})</span></div>
<div class="a" style="left:175.06px;top:246.01px;width:433.56px;height:18.7px;background:#E9E9E9;"></div>
<div class="a code" style="left:175.06px;top:249.48px"><span style="color:#1E1E1E">.</span><span style="color:#74531F">Editable</span><span style="color:#1E1E1E">(</span><span style="color:#1F377F">editable</span><span style="color:#1E1E1E"> =&gt; </span><span style="color:#1F377F">editable</span><span style="color:#1E1E1E">.</span><span style="color:#74531F">Mode</span><span style="color:#1E1E1E">(</span><span style="color:#2B91AF">GridEditMode</span><span style="color:#1E1E1E">.InCell))</span></div>
<div class="a" style="left:175.06px;top:264.72px;width:228.9px;height:18.7px;background:#E9E9E9;"></div>
<div class="a code" style="left:175.06px;top:268.19px"><span style="color:#1E1E1E">.</span><span style="color:#74531F">Pageable</span><span style="color:#1E1E1E">(</span><span style="color:#1F377F">pageable</span><span style="color:#1E1E1E"> =&gt; </span><span style="color:#1F377F">pageable</span></div>
<div class="a" style="left:175.06px;top:283.43px;width:107.62px;height:18.7px;background:#E9E9E9;"></div>
<div class="a code" style="left:175.06px;top:286.90px"><span style="color:#1E1E1E">.</span><span style="color:#74531F">Refresh</span><span style="color:#1E1E1E">(</span><span style="color:#0000FF">true</span><span style="color:#1E1E1E">)</span></div>
<div class="a" style="left:175.06px;top:302.14px;width:115.2px;height:18.7px;background:#E9E9E9;"></div>
<div class="a code" style="left:175.06px;top:305.61px"><span style="color:#1E1E1E">.</span><span style="color:#74531F">Enabled</span><span style="color:#1E1E1E">(</span><span style="color:#0000FF">false</span><span style="color:#1E1E1E">)</span></div>
<div class="a" style="left:175.06px;top:320.85px;width:206.16px;height:18.7px;background:#E9E9E9;"></div>
<div class="a code" style="left:175.06px;top:324.32px"><span style="color:#1E1E1E">.</span><span style="color:#74531F">PageSizes</span><span style="color:#1E1E1E">(</span><span style="color:#0000FF">new</span><span style="color:#1E1E1E"> </span><span style="color:#2B91AF">List</span><span style="color:#1E1E1E">&lt;</span><span style="color:#0000FF">object</span><span style="color:#1E1E1E">&gt;</span></div>
<div class="a" style="left:205.38px;top:339.56px;width:145.52px;height:18.7px;background:#E9E9E9;"></div>
<div class="a code" style="left:205.38px;top:343.03px"><span style="color:#1E1E1E">{ 5, 10, 20, 100 })</span></div>
<div class="a" style="left:205.38px;top:358.27px;width:9.08px;height:18.7px;background:#E9E9E9;"></div>
<div class="a code" style="left:205.38px;top:361.74px"><span style="color:#1E1E1E">)</span></div>
<div class="a" style="left:205.38px;top:395.69px;width:100.04px;height:18.7px;background:#E9E9E9;"></div>
<div class="a code" style="left:205.38px;top:399.16px"><span style="color:#1E1E1E">.</span><span style="color:#74531F">Scrollable</span><span style="color:#1E1E1E">()</span></div>
<div class="a" style="left:205.38px;top:414.4px;width:372.92px;height:18.7px;background:#E9E9E9;"></div>
<div class="a code" style="left:205.38px;top:417.87px"><span style="color:#1E1E1E">.</span><span style="color:#74531F">Filterable</span><span style="color:#1E1E1E">(</span><span style="color:#1F377F">ftb</span><span style="color:#1E1E1E"> =&gt; </span><span style="color:#1F377F">ftb</span><span style="color:#1E1E1E">.</span><span style="color:#74531F">Mode</span><span style="color:#1E1E1E">(</span><span style="color:#2B91AF">GridFilterMode</span><span style="color:#1E1E1E">.Menu))</span></div>
<div class="a" style="left:205.38px;top:433.11px;width:319.86px;height:18.7px;background:#E9E9E9;"></div>
<div class="a code" style="left:205.38px;top:436.58px"><span style="color:#1E1E1E">.</span><span style="color:#74531F">Resizable</span><span style="color:#1E1E1E">(</span><span style="color:#1F377F">resize</span><span style="color:#1E1E1E"> =&gt; </span><span style="color:#1F377F">resize</span><span style="color:#1E1E1E">.</span><span style="color:#74531F">Columns</span><span style="color:#1E1E1E">(</span><span style="color:#0000FF">true</span><span style="color:#1E1E1E">))</span></div>
<div class="a" style="left:205.38px;top:451.82px;width:274.38px;height:18.7px;background:#E9E9E9;"></div>
<div class="a code" style="left:205.38px;top:455.29px"><span style="color:#1E1E1E">.</span><span style="color:#74531F">Selectable</span><span style="color:#1E1E1E">(</span><span style="color:#1F377F">selectable</span><span style="color:#1E1E1E"> =&gt; </span><span style="color:#1F377F">selectable</span></div>
<div class="a" style="left:205.38px;top:470.53px;width:251.64px;height:18.7px;background:#E9E9E9;"></div>
<div class="a code" style="left:205.38px;top:474.00px"><span style="color:#1E1E1E">.</span><span style="color:#74531F">Mode</span><span style="color:#1E1E1E">(</span><span style="color:#2B91AF">GridSelectionMode</span><span style="color:#1E1E1E">.Multiple)</span></div>
<div class="a" style="left:205.38px;top:489.24px;width:221.32px;height:18.7px;background:#E9E9E9;"></div>
<div class="a code" style="left:205.38px;top:492.71px"><span style="color:#1E1E1E">.</span><span style="color:#74531F">Type</span><span style="color:#1E1E1E">(</span><span style="color:#2B91AF">GridSelectionType</span><span style="color:#1E1E1E">.Row))</span></div>
<div class="a" style="left:205.38px;top:507.95px;width:274.38px;height:18.7px;background:#E9E9E9;"></div>
<div class="a code" style="left:205.38px;top:511.42px"><span style="color:#1E1E1E">.</span><span style="color:#74531F">DataSource</span><span style="color:#1E1E1E">(</span><span style="color:#1F377F">dataSource</span><span style="color:#1E1E1E"> =&gt; </span><span style="color:#1F377F">dataSource</span></div>
<div class="a" style="left:205.38px;top:526.66px;width:54.56px;height:18.7px;background:#E9E9E9;"></div>
<div class="a code" style="left:205.38px;top:530.13px"><span style="color:#1E1E1E">.</span><span style="color:#74531F">Ajax</span><span style="color:#1E1E1E">()</span></div>
<div class="a" style="left:220.54px;top:545.37px;width:92.46px;height:18.7px;background:#E9E9E9;"></div>
<div class="a code" style="left:220.54px;top:548.84px"><span style="color:#1E1E1E">.</span><span style="color:#74531F">Batch</span><span style="color:#1E1E1E">(</span><span style="color:#0000FF">true</span><span style="color:#1E1E1E">)</span></div>
<div class="a" style="left:205.38px;top:564.08px;width:289.54px;height:18.7px;background:#E9E9E9;"></div>
<div class="a code" style="left:205.38px;top:567.55px"><span style="color:#1E1E1E">.</span><span style="color:#74531F">Model</span><span style="color:#1E1E1E">(</span><span style="color:#1F377F">model</span><span style="color:#1E1E1E"> =&gt; { </span><span style="color:#1F377F">model</span><span style="color:#1E1E1E">.</span><span style="color:#74531F">Id</span><span style="color:#1E1E1E">(</span><span style="color:#1F377F">p</span><span style="color:#1E1E1E"> =&gt; </span><span style="color:#1F377F">p</span><span style="color:#1E1E1E">.Id);</span></div>
<div class="a" style="left:235.7px;top:582.79px;width:509.36px;height:18.7px;background:#E9E9E9;"></div>
<div class="a code" style="left:235.70px;top:586.26px"><span style="color:#1F377F">model</span><span style="color:#1E1E1E">.</span><span style="color:#74531F">Field</span><span style="color:#1E1E1E">(</span><span style="color:#1F377F">product</span><span style="color:#1E1E1E"> =&gt; </span><span style="color:#1F377F">product</span><span style="color:#1E1E1E">.SpecificationModel).</span><span style="color:#74531F">Editable</span><span style="color:#1E1E1E">(</span><span style="color:#0000FF">false</span><span style="color:#1E1E1E">);</span></div>
<div class="a" style="left:235.7px;top:601.5px;width:463.88px;height:18.7px;background:#E9E9E9;"></div>
<div class="a code" style="left:235.70px;top:604.97px"><span style="color:#1F377F">model</span><span style="color:#1E1E1E">.</span><span style="color:#74531F">Field</span><span style="color:#1E1E1E">(</span><span style="color:#1F377F">product</span><span style="color:#1E1E1E"> =&gt; </span><span style="color:#1F377F">product</span><span style="color:#1E1E1E">.MaterialCode).</span><span style="color:#74531F">Editable</span><span style="color:#1E1E1E">(</span><span style="color:#0000FF">false</span><span style="color:#1E1E1E">);</span></div>
<div class="a" style="left:235.7px;top:620.21px;width:463.88px;height:18.7px;background:#E9E9E9;"></div>
<div class="a code" style="left:235.70px;top:623.68px"><span style="color:#1F377F">model</span><span style="color:#1E1E1E">.</span><span style="color:#74531F">Field</span><span style="color:#1E1E1E">(</span><span style="color:#1F377F">product</span><span style="color:#1E1E1E"> =&gt; </span><span style="color:#1F377F">product</span><span style="color:#1E1E1E">.MaterialName).</span><span style="color:#74531F">Editable</span><span style="color:#1E1E1E">(</span><span style="color:#0000FF">false</span><span style="color:#1E1E1E">);</span></div>
<div class="a" style="left:205.38px;top:638.92px;width:16.66px;height:18.7px;background:#E9E9E9;"></div>
<div class="a code" style="left:205.38px;top:642.39px"><span style="color:#1E1E1E">})</span></div>
<div class="a" style="left:205.38px;top:657.63px;width:516.94px;height:18.7px;background:#E9E9E9;"></div>
<div class="a code" style="left:205.38px;top:661.10px"><span style="color:#1E1E1E">.</span><span style="color:#74531F">Create</span><span style="color:#1E1E1E">(</span><span style="color:#1F377F">update</span><span style="color:#1E1E1E"> =&gt; </span><span style="color:#1F377F">update</span><span style="color:#1E1E1E">.</span><span style="color:#74531F">Action</span><span style="color:#1E1E1E">(</span><span style="color:#A31515">"EditingInline_Create"</span><span style="color:#1E1E1E">, </span><span style="color:#A31515">"GridData"</span><span style="color:#1E1E1E">))</span></div>
<div class="a" style="left:205.38px;top:676.34px;width:456.3px;height:18.7px;background:#E9E9E9;"></div>
<div class="a code" style="left:205.38px;top:679.81px"><span style="color:#1E1E1E">.</span><span style="color:#74531F">Read</span><span style="color:#1E1E1E">(</span><span style="color:#1F377F">read</span><span style="color:#1E1E1E"> =&gt; </span><span style="color:#1F377F">read</span><span style="color:#1E1E1E">.</span><span style="color:#74531F">Action</span><span style="color:#1E1E1E">(</span><span style="color:#A31515">"EditingInline_Read"</span><span style="color:#1E1E1E">, </span><span style="color:#A31515">"GridData"</span><span style="color:#1E1E1E">))</span></div>
<div class="a" style="left:205.38px;top:695.05px;width:842.88px;height:18.7px;background:#E9E9E9;"></div>
<div class="a code" style="left:205.38px;top:698.52px"><span style="color:#1E1E1E">.</span><span style="color:#74531F">Update</span><span style="color:#1E1E1E">(</span><span style="color:#1F377F">update</span><span style="color:#1E1E1E"> =&gt; </span><span style="color:#1F377F">update</span><span style="color:#1E1E1E">.</span><span style="color:#74531F">Action</span><span style="color:#1E1E1E">(</span><span style="color:#A31515">"EditingCustom_Update"</span><span style="color:#1E1E1E">, </span><span style="color:#A31515">"Purchase"</span><span style="color:#1E1E1E">, </span><span style="color:#2B91AF">JsonConvert</span><span style="color:#1E1E1E">.</span><span style="color:#74531F">SerializeObject</span><span style="color:#1E1E1E">(PurchaseJson)))</span></div>
<div class="a" style="left:205.38px;top:713.76px;width:115.2px;height:18.7px;background:#E9E9E9;"></div>
<div class="a code" style="left:205.38px;top:717.23px"><span style="color:#008000">//.PageSize(15)</span></div>
<div class="a" style="left:205.38px;top:732.47px;width:297.12px;height:18.7px;background:#E9E9E9;"></div>
<div class="a code" style="left:205.38px;top:735.94px"><span style="color:#1E1E1E">.</span><span style="color:#74531F">Read</span><span style="color:#1E1E1E">(</span><span style="color:#1F377F">read</span><span style="color:#1E1E1E"> =&gt; </span><span style="color:#1F377F">read</span><span style="color:#1E1E1E">.</span><span style="color:#74531F">Url</span><span style="color:#1E1E1E">(Url.</span><span style="color:#74531F">RouteUrl</span><span style="color:#1E1E1E">(</span><span style="color:#0000FF">new</span></div>
<div class="a" style="left:205.38px;top:751.18px;width:9.08px;height:18.7px;background:#E9E9E9;"></div>
<div class="a code" style="left:205.38px;top:754.65px"><span style="color:#1E1E1E">{</span></div>
<div class="a" style="left:235.7px;top:769.89px;width:122.78px;height:18.7px;background:#E9E9E9;"></div>
<div class="a code" style="left:235.70px;top:773.36px"><span style="color:#1E1E1E">action = </span><span style="color:#A31515">"Read"</span><span style="color:#1E1E1E">,</span></div>
<div class="a" style="left:235.7px;top:788.6px;width:183.42px;height:18.7px;background:#E9E9E9;"></div>
<div class="a code" style="left:235.70px;top:792.07px"><span style="color:#1E1E1E">controller = </span><span style="color:#A31515">"Purchase"</span><span style="color:#1E1E1E">,</span></div>
<div class="a" style="left:235.7px;top:807.31px;width:425.98px;height:18.7px;background:#E9E9E9;"></div>
<div class="a code" style="left:235.70px;top:810.78px"><span style="color:#1E1E1E">purchaseJson = </span><span style="color:#2B91AF">JsonConvert</span><span style="color:#1E1E1E">.</span><span style="color:#74531F">SerializeObject</span><span style="color:#1E1E1E">(PurchaseJson)</span></div>
<div class="a" style="left:205.38px;top:826.02px;width:46.98px;height:18.7px;background:#E9E9E9;"></div>
<div class="a" style="left:243.28px;top:826.02px;width:8.58px;height:18.7px;background:#FFF200;"></div>
<div class="a code" style="left:205.38px;top:829.49px"><span style="color:#1E1E1E">})))))</span></div>
<div class="a code" style="left:144.74px;top:904.33px"><span style="color:#0000FF">&lt;</span><span style="color:#0000FF">/</span><span style="color:#800000">div</span><span style="color:#0000FF">&gt;</span></div>
<div class="a" style="left:1223px;top:227px;width:39px;height:33px;background:#E8EDFB;border:1px solid #9DAAD0;border-right:none"></div>
<svg class="a" style="left:1234px;top:233px;" width="17" height="21" viewBox="0 0 17 21"><path d="M0 8.5 H17 M0 12.5 H17" stroke="#1E1E1E" stroke-width="2"/><path d="M8.5 1 V20" stroke="#1E1E1E" stroke-width="1.5"/><path d="M4.5 4.5 L8.5 0.5 L12.5 4.5 M4.5 16.5 L8.5 20.5 L12.5 16.5" fill="none" stroke="#1E1E1E" stroke-width="1.8"/></svg>
<div class="a" style="left:1223px;top:260px;width:28px;height:649px;background:#E8E8EC;"></div>
<svg class="a" style="left:1231px;top:269px;" width="13" height="7" viewBox="0 0 13 7"><path d="M0 7 L6.5 0 L13 7 Z" fill="#868999"/></svg>
<svg class="a" style="left:1231px;top:892px;" width="13" height="7" viewBox="0 0 13 7"><path d="M0 0 L6.5 7 L13 0 Z" fill="#868999"/></svg>
<div class="a" style="left:1229px;top:645px;width:17px;height:100px;background:#C2C3C9;"></div>
<div class="a" style="left:1223px;top:362px;width:28px;height:3px;background:#0000CD;"></div>
<div class="a" style="left:1253px;top:356px;width:8px;height:8px;background:#FFD700;"></div>
<div class="a" style="left:1253px;top:634px;width:8px;height:11px;background:#FFD700;"></div>
<div class="a" style="left:1253px;top:690px;width:8px;height:5px;background:#FFD700;"></div>
<div class="a" style="left:1253px;top:712px;width:8px;height:5px;background:#FFD700;"></div>
<svg class="a" style="left:94px;top:233px;" width="1072" height="630" viewBox="0 0 1072 630"><rect x="2.35" y="2.35" width="1066.3" height="624.3" rx="4" fill="none" stroke="#FF1D12" stroke-width="4.7"/></svg>
<svg class="a" style="left:590px;top:715px;" width="82" height="76" viewBox="0 0 82 76"><path d="M3.8 3.9 L23.5 7.5 L18.1 10 L79.7 73.7 L10.9 17 L9.4 22.3 Z" fill="#FF1D12"/></svg>
<div class="a" style="left:11px;top:909px;width:1251px;height:26px;background:#E8E8EC;"></div>
<div class="a" style="left:11px;top:909px;width:90px;height:26px;background:#FAFAFC;border:1px solid #C9CEDF"></div>
<div class="a tx" style="left:14.50px;top:913.42px;font-size:19px;line-height:19px;color:#1E1E1E;font-family:'Liberation Sans',sans-serif;font-weight:400;transform:scaleX(0.9186);">78 %</div>
<svg class="a" style="left:88px;top:920.5px;" width="9" height="5" viewBox="0 0 9 5"><path d="M0 0 L9 0 L4.5 5 Z" fill="#1E1E1E"/></svg>
<svg class="a" style="left:137px;top:915px;" width="17" height="17" viewBox="0 0 17 17"><circle cx="8.5" cy="8.5" r="8.5" fill="#388A34"/><path d="M4 8.5 L7.3 11.8 L13 5.5" fill="none" stroke="#FFFFFF" stroke-width="2.4"/></svg>
<div class="a tx" style="left:161.00px;top:913.42px;font-size:19px;line-height:19px;color:#1E1E1E;font-family:'Liberation Sans',sans-serif;font-weight:400;transform:scaleX(0.9520);"><span style="font-size:0.93em">未找到相关问题</span></div>
<svg class="a" style="left:404px;top:915px;" width="9" height="14" viewBox="0 0 9 14"><path d="M9 0 L0 7 L9 14 Z" fill="#868999"/></svg>
<div class="a" style="left:421px;top:915px;width:298px;height:14px;background:#C2C3C9;"></div>
<svg class="a" style="left:848px;top:915px;" width="9" height="14" viewBox="0 0 9 14"><path d="M0 0 L9 7 L0 14 Z" fill="#868999"/></svg>
<div class="a tx" style="left:899.00px;top:913.42px;font-size:19px;line-height:19px;color:#1E1E1E;font-family:'Liberation Sans',sans-serif;font-weight:400;transform:scaleX(0.9388);"><span style="font-size:0.93em">行</span>: 29</div>
<div class="a tx" style="left:972.00px;top:913.42px;font-size:19px;line-height:19px;color:#1E1E1E;font-family:'Liberation Sans',sans-serif;font-weight:400;transform:scaleX(0.9123);"><span style="font-size:0.93em">字符</span>: 5</div>
<div class="a tx" style="left:1052.00px;top:913.42px;font-size:19px;line-height:19px;color:#1E1E1E;font-family:'Liberation Sans',sans-serif;font-weight:400;transform:scaleX(0.9375);"><span style="font-size:0.93em">列</span>: 11</div>
<div class="a tx" style="left:1126.00px;top:913.42px;font-size:19px;line-height:19px;color:#1E1E1E;font-family:'Liberation Sans',sans-serif;font-weight:400;transform:scaleX(0.9623);"><span style="font-size:0.93em">制表符</span></div>
<div class="a tx" style="left:1206.17px;top:913.42px;font-size:19px;line-height:19px;color:#1E1E1E;font-family:'Liberation Sans',sans-serif;font-weight:400;transform:scaleX(0.8333);">CRLF</div>
<div class="a tx" style="left:9.00px;top:950.42px;font-size:19px;line-height:19px;color:#F0F0F8;font-family:'Liberation Sans',sans-serif;font-weight:400;transform:scaleX(1.0141);"><span style="font-size:0.93em">错误列表</span></div>
<div class="a" style="left:9px;top:975px;width:72px;height:9px;background:#3F5281;"></div>
<div class="a" style="left:0px;top:984px;width:1920px;height:36px;background:#A04B41;"></div>
<svg class="a" style="left:6px;top:995px;" width="24" height="16" viewBox="0 0 24 16"><path d="M5 1 H23 L19 15 H1 Z" fill="none" stroke="#FFFFFF" stroke-width="1.8"/></svg>
<div class="a tx" style="left:41.50px;top:993.42px;font-size:19px;line-height:19px;color:#FFFFFF;font-family:'Liberation Sans',sans-serif;font-weight:400;transform:scaleX(1.0000);"><span style="font-size:0.93em">就绪</span></div>
<svg class="a" style="left:1578px;top:993px;" width="18" height="16" viewBox="0 0 18 16"><path d="M2 14 L3.5 9.5 L12 1 L16 5 L7.5 13.5 Z" fill="#F2F2F2"/><path d="M10.5 2.5 L14.5 6.5" stroke="#A04B41" stroke-width="1.2"/></svg>
<div class="a tx" style="left:1605.93px;top:993.42px;font-size:19px;line-height:19px;color:#FFFFFF;font-family:'Liberation Sans',sans-serif;font-weight:400;transform:scaleX(1.0714);">99*</div>
<svg class="a" style="left:1680px;top:992px;" width="22" height="19" viewBox="0 0 22 19"><path d="M11 18 V9 L3 1.5 M11 9 L19 1.5" fill="none" stroke="#FFFFFF" stroke-width="1.8"/><path d="M1 1 H6 M1 1 V6 M16 1 H21 M21 1 V6" stroke="#FFFFFF" stroke-width="1.6"/></svg>
<div class="a tx" style="left:1710.93px;top:993.42px;font-size:19px;line-height:19px;color:#FFFFFF;font-family:'Liberation Sans',sans-serif;font-weight:400;transform:scaleX(1.0702);">Logbot</div>
<svg class="a" style="left:1783px;top:1001px;" width="13" height="7" viewBox="0 0 13 7"><path d="M0 7 L6.5 0 L13 7 Z" fill="#FFFFFF"/></svg>
<svg class="a" style="left:1831px;top:996px;" width="16" height="16" viewBox="0 0 16 16"><circle cx="8" cy="8" r="7.6" fill="#F0584C"/></svg>
<svg class="a" style="left:1862px;top:992px;" width="32" height="28" viewBox="0 0 32 28"><path d="M3 15 C3 7 5 3 10 3 C15 3 17 7 17 15 L19 17 H1 Z" fill="#E6E6E6"/><circle cx="10" cy="18" r="2" fill="#E6E6E6"/><circle cx="21.5" cy="18.5" r="8.5" fill="#FFFFFF"/><path d="M20 14.5 L22.5 12.5 V24" fill="none" stroke="#1E1E1E" stroke-width="1.7"/></svg>
<div class="a" style="left:0px;top:1020px;width:1920px;height:11px;background:linear-gradient(90deg,#D3E6EE 0%,#D3E5EE 50%,#D5DEE9 100%);"></div>
<div class="a" style="left:602px;top:1020px;width:73px;height:11px;background:linear-gradient(90deg,#E6F0F5,#EEF5F8 50%,#E9F2F6);"></div>
<div class="a tx" style="left:1757.51px;top:1027.61px;font-size:17px;line-height:17px;color:#1E1E1E;font-family:'Liberation Sans',sans-serif;font-weight:400;transform:scaleX(1.1622);">10:40</div>
<div class="a" style="left:1912px;top:1020px;width:1px;height:11px;background:#8A8F9A;"></div>
<div class="a" style="left:1275px;top:196px;width:634px;height:33px;background:#40568D;"></div>
<div class="a tx" style="left:1281.00px;top:203.42px;font-size:19px;line-height:19px;color:#FFFFFF;font-family:'Liberation Sans',sans-serif;font-weight:400;transform:scaleX(1.0062);"><span style="font-size:0.93em">解决方案资源管理器</span></div>
<svg class="a" style="left:1833px;top:209px;" width="12" height="7" viewBox="0 0 12 7"><path d="M0 0 H12 L6 7 Z" fill="#A7B2D8"/></svg>
<svg class="a" style="left:1860px;top:204px;" width="11" height="17" viewBox="0 0 11 17"><path d="M2.5 0.8 H8.5 V9.5 H2.5 Z M0 9.5 H11" fill="none" stroke="#A7B2D8" stroke-width="1.6"/><rect x="6" y="1" width="2.5" height="8.5" fill="#A7B2D8"/><path d="M5.5 9.5 V17" stroke="#A7B2D8" stroke-width="1.6"/></svg>
<svg class="a" style="left:1884px;top:206px;" width="15" height="13" viewBox="0 0 15 13"><path d="M0.5 0.5 L14.5 12.5 M14.5 0.5 L0.5 12.5" stroke="#A7B2D8" stroke-width="1.8"/></svg>
<div class="a" style="left:1275px;top:229px;width:634px;height:45px;background:#CCD5F0;"></div>
<svg class="a" style="left:1289px;top:242px;" width="18" height="18" viewBox="0 0 18 18"><circle cx="9" cy="9" r="9" fill="#A9B0CA"/><path d="M13.5 9 H5.5 M9 5 L5 9 L9 13" fill="none" stroke="#CCD5F0" stroke-width="2.4"/></svg>
<svg class="a" style="left:1323px;top:242px;" width="18" height="18" viewBox="0 0 18 18"><circle cx="9" cy="9" r="9" fill="#00539C"/><path d="M4.5 9 H12.5 M9 5 L13 9 L9 13" fill="none" stroke="#FFFFFF" stroke-width="2.4"/></svg>
<svg class="a" style="left:1356px;top:240px;" width="21" height="22" viewBox="0 0 21 22"><path d="M3 11 V21 H18 V11" fill="#D9DDF0" stroke="#3C3C3C" stroke-width="1.8"/><path d="M1 12 L10.5 2 L20 12" fill="none" stroke="#3C3C3C" stroke-width="2"/><rect x="8" y="13" width="5" height="8" fill="#3C3C3C"/><path d="M15.5 2 V7" stroke="#3C3C3C" stroke-width="1.8"/></svg>
<svg class="a" style="left:1389px;top:240px;" width="22" height="22" viewBox="0 0 22 22"><rect x="8" y="1" width="13" height="17" fill="#D9DDF0" stroke="#3C3C3C" stroke-width="1.8"/><rect x="8" y="1" width="13" height="3" fill="#3C3C3C"/><path d="M11 7 H18 M11 10 H18 M11 13 H18" stroke="#3C3C3C" stroke-width="1.4"/><path d="M9 9 L12 10.5 V20 L9 21.5 L4 17 L2 18.5 L0.5 18 V12.5 L2 12 L4 13.5 Z M9 12.5 L6.5 15.3 L9 18 Z" fill="#8A3FD1" fill-rule="evenodd"/></svg>
<div class="a" style="left:1421px;top:235px;width:2px;height:32px;background:#9AA6CB;"></div>
<svg class="a" style="left:1436px;top:239px;" width="20" height="22" viewBox="0 0 20 22"><path d="M4.71 0.79 A4.8 4.8 0 0 0 4.71 9.81" fill="none" stroke="#383838" stroke-width="1.6"/><path d="M7.99 9.81 A4.8 4.8 0 0 0 7.99 0.79" fill="none" stroke="#383838" stroke-width="1.6"/><path d="M3.6 -0.6 L8.2 0.8 L4.4 3.6 Z M9.1 11.2 L4.5 9.8 L8.3 7 Z" fill="#383838"/><circle cx="14.9" cy="17.5" r="3.8" fill="#2D7F2A"/></svg>
<div class="a" style="left:1468px;top:235px;width:2px;height:32px;background:#9AA6CB;"></div>
<svg class="a" style="left:1487px;top:240px;" width="20" height="22" viewBox="0 0 20 22"><path d="M0 0.5 H7 L4.5 3.5 V7 L3 7 V3.5 Z" fill="#3C3C3C"/><circle cx="12" cy="13.5" r="7.5" fill="#D9DDF0" stroke="#3C3C3C" stroke-width="1.8"/><path d="M12 9 V14 H15.5" fill="none" stroke="#3C3C3C" stroke-width="1.6"/></svg>
<svg class="a" style="left:1518px;top:249px;" width="9" height="5" viewBox="0 0 9 5"><path d="M0 0 L9 0 L4.5 5 Z" fill="#1E1E1E"/></svg>
<svg class="a" style="left:1538px;top:240px;" width="22" height="21" viewBox="0 0 22 21"><path d="M3 9 A8 7 0 0 1 17 5" fill="none" stroke="#00539C" stroke-width="3.2"/><path d="M19 12 A8 7 0 0 1 5 16" fill="none" stroke="#00539C" stroke-width="3.2"/><path d="M14 0 H21 V7 Z M8 21 H1 V14 Z" fill="#00539C"/></svg>
<svg class="a" style="left:1574px;top:241px;" width="19" height="21" viewBox="0 0 19 21"><path d="M14 6 A7.5 7.5 0 1 0 17 12" fill="none" stroke="#A9B0CA" stroke-width="2.8"/><path d="M9 0 L17 1 L15 8 Z" fill="#A9B0CA"/></svg>
<svg class="a" style="left:1609px;top:242px;" width="18" height="17" viewBox="0 0 18 17"><rect x="1" y="7" width="9" height="9" fill="#D9DDF0" stroke="#3C3C3C" stroke-width="1.6"/><path d="M4 11.5 H7" stroke="#00539C" stroke-width="1.6"/><path d="M4 4.5 H13.5 V12 M7 1 H17 V9" fill="none" stroke="#3C3C3C" stroke-width="1.6"/></svg>
<div class="a" style="left:1634px;top:232px;width:34px;height:38px;background:#FFEFC6;border:2px solid #7A5A0A"></div>
<svg class="a" style="left:1640px;top:240px;" width="22" height="22" viewBox="0 0 22 22"><path d="M1 1 H9 V13 H1 Z" fill="#D7F2C8" stroke="#3C3C3C" stroke-width="1.5"/><path d="M10 1 H17 L21 5 V13 H10 Z" fill="#D7F2C8" stroke="#3C3C3C" stroke-width="1.5"/><path d="M5 7 H13 L16 10 V21 H5 Z" fill="#D7F2C8" stroke="#3C3C3C" stroke-width="1.6"/><path d="M8 13 H13 M8 16 H13 M8 19 H13" stroke="#3C3C3C" stroke-width="1.3"/></svg>
<div class="a" style="left:1672px;top:235px;width:2px;height:32px;background:#9AA6CB;"></div>
<svg class="a" style="left:1687px;top:240px;" width="22" height="22" viewBox="0 0 22 22"><path d="M2.5 19.5 L11 11" stroke="#2D2D2D" stroke-width="4.5" stroke-linecap="round"/><path d="M9 10 C8 4 13 0 19 2 L15 6 L16 8 L18 9 L22 5 C23 11 19 15 13 13 Z" fill="#2D2D2D"/></svg>
<svg class="a" style="left:1721px;top:247px;" width="22" height="8" viewBox="0 0 22 8"><rect x="0" y="5" width="22" height="2.5" fill="#2D2D2D"/><rect x="10" y="0" width="12" height="7.5" fill="#2D2D2D"/></svg>
<div class="a" style="left:1275px;top:273px;width:634px;height:32px;background:#CCD5F0;"></div>
<div class="a" style="left:1275px;top:273px;width:634px;height:1.5px;background:#B6BED6;"></div>
<div class="a" style="left:1276px;top:274px;width:632px;height:32px;background:#FCFCFC;border:2px solid #C0C7D9"></div>
<div class="a tx" style="left:1283.00px;top:280.42px;font-size:19px;line-height:19px;color:#6D6D6D;font-family:'Liberation Sans',sans-serif;font-weight:400;transform:scaleX(1.0039);"><span style="font-size:0.93em">搜索解决方案资源管理器</span>(Ctrl+;)</div>
<svg class="a" style="left:1866px;top:279px;" width="20" height="20" viewBox="0 0 20 20"><circle cx="12.5" cy="7.5" r="5.5" fill="none" stroke="#6D6D6D" stroke-width="2.4"/><path d="M8.5 11.5 L2 18" stroke="#6D6D6D" stroke-width="3.2" stroke-linecap="round"/></svg>
<svg class="a" style="left:1894px;top:287px;" width="8" height="5" viewBox="0 0 8 5"><path d="M0 0 L8 0 L4.0 5 Z" fill="#6D6D6D"/></svg>
<div class="a" style="left:1275px;top:305px;width:634px;height:4px;background:#CCD5F0;"></div>
<div class="a" style="left:1275px;top:309px;width:608px;height:626px;background:#F6F7FD;"></div>
<div class="a" style="left:1275px;top:309px;width:608px;height:26px;background:#E6E8F0;"></div>
<div class="a" style="left:1883px;top:309px;width:26px;height:626px;background:#E8E8EC;"></div>
<svg class="a" style="left:1890px;top:318px;" width="12" height="7" viewBox="0 0 12 7"><path d="M0 7 L6 0 L12 7 Z" fill="#868999"/></svg>
<svg class="a" style="left:1890px;top:917px;" width="12" height="7" viewBox="0 0 12 7"><path d="M0 0 L6 7 L12 0 Z" fill="#868999"/></svg>
<div class="a" style="left:1889px;top:592px;width:13px;height:38px;background:#C2C3C9;"></div>
<svg class="a" style="left:1318px;top:319px;" width="11" height="10" viewBox="0 0 11 10"><path d="M11 0 V10 H0 Z" fill="#1E1E1E"/></svg>
<svg class="a" style="left:1336px;top:319px;" width="10" height="10" viewBox="0 0 10 10"><defs><radialGradient id="gg" cx="0.38" cy="0.35" r="0.65"><stop offset="0" stop-color="#A8EC88"/><stop offset="0.5" stop-color="#36B426"/><stop offset="1" stop-color="#23701E"/></radialGradient></defs><circle cx="5" cy="5" r="4.8" fill="url(#gg)"/></svg>
<svg class="a" style="left:1352px;top:315px;" width="21" height="17" viewBox="0 0 21 17"><path d="M1 16 V1.5 H8 L10 3.5 H17 V6" fill="none" stroke="#DCB067" stroke-width="1.6"/><path d="M1 16 L4.5 7 H20.5 L17 16 Z" fill="#DCB067"/></svg>
<div class="a tx" style="left:1380.97px;top:314.72px;font-size:19px;line-height:19px;color:#1E1E1E;font-family:'Liberation Sans',sans-serif;font-weight:400;transform:scaleX(1.0303);">Content</div>
<svg class="a" style="left:1345px;top:341px;" width="9" height="14" viewBox="0 0 9 14"><path d="M1 1 L8 7 L1 13 Z" fill="none" stroke="#1E1E1E" stroke-width="1.5"/></svg>
<svg class="a" style="left:1363.2px;top:344.8px;" width="10" height="10" viewBox="0 0 10 10"><defs><radialGradient id="gg" cx="0.38" cy="0.35" r="0.65"><stop offset="0" stop-color="#A8EC88"/><stop offset="0.5" stop-color="#36B426"/><stop offset="1" stop-color="#23701E"/></radialGradient></defs><circle cx="5" cy="5" r="4.8" fill="url(#gg)"/></svg>
<svg class="a" style="left:1378px;top:340px;" width="21" height="16" viewBox="0 0 21 16"><path d="M0 1 H7 L9 3 H20 V16 H0 Z" fill="#DCB067"/><path d="M1.5 3 H7.5 V4 H1.5Z" fill="#F3E2BF"/></svg>
<div class="a tx" style="left:1409.50px;top:340.72px;font-size:19px;line-height:19px;color:#1E1E1E;font-family:'Liberation Sans',sans-serif;font-weight:400;transform:scaleX(1.0000);">echarts</div>
<svg class="a" style="left:1345px;top:367px;" width="9" height="14" viewBox="0 0 9 14"><path d="M1 1 L8 7 L1 13 Z" fill="none" stroke="#1E1E1E" stroke-width="1.5"/></svg>
<svg class="a" style="left:1363.2px;top:370.8px;" width="10" height="10" viewBox="0 0 10 10"><defs><radialGradient id="gg" cx="0.38" cy="0.35" r="0.65"><stop offset="0" stop-color="#A8EC88"/><stop offset="0.5" stop-color="#36B426"/><stop offset="1" stop-color="#23701E"/></radialGradient></defs><circle cx="5" cy="5" r="4.8" fill="url(#gg)"/></svg>
<svg class="a" style="left:1378px;top:366px;" width="21" height="16" viewBox="0 0 21 16"><path d="M0 1 H7 L9 3 H20 V16 H0 Z" fill="#DCB067"/><path d="M1.5 3 H7.5 V4 H1.5Z" fill="#F3E2BF"/></svg>
<div class="a tx" style="left:1409.50px;top:366.72px;font-size:19px;line-height:19px;color:#1E1E1E;font-family:'Liberation Sans',sans-serif;font-weight:400;transform:scaleX(1.0373);">kendo</div>
<svg class="a" style="left:1345px;top:393px;" width="9" height="14" viewBox="0 0 9 14"><path d="M1 1 L8 7 L1 13 Z" fill="none" stroke="#1E1E1E" stroke-width="1.5"/></svg>
<svg class="a" style="left:1363.2px;top:396.8px;" width="10" height="10" viewBox="0 0 10 10"><defs><radialGradient id="gg" cx="0.38" cy="0.35" r="0.65"><stop offset="0" stop-color="#A8EC88"/><stop offset="0.5" stop-color="#36B426"/><stop offset="1" stop-color="#23701E"/></radialGradient></defs><circle cx="5" cy="5" r="4.8" fill="url(#gg)"/></svg>
<svg class="a" style="left:1378px;top:392px;" width="21" height="16" viewBox="0 0 21 16"><path d="M0 1 H7 L9 3 H20 V16 H0 Z" fill="#DCB067"/><path d="M1.5 3 H7.5 V4 H1.5Z" fill="#F3E2BF"/></svg>
<div class="a tx" style="left:1409.50px;top:392.72px;font-size:19px;line-height:19px;color:#1E1E1E;font-family:'Liberation Sans',sans-serif;font-weight:400;transform:scaleX(0.9348);">les</div>
<svg class="a" style="left:1363.2px;top:422.8px;" width="10" height="10" viewBox="0 0 10 10"><defs><radialGradient id="gg" cx="0.38" cy="0.35" r="0.65"><stop offset="0" stop-color="#A8EC88"/><stop offset="0.5" stop-color="#36B426"/><stop offset="1" stop-color="#23701E"/></radialGradient></defs><circle cx="5" cy="5" r="4.8" fill="url(#gg)"/></svg>
<svg class="a" style="left:1381.5px;top:419px;" width="15" height="18" viewBox="0 0 15 18"><path d="M1 2 Q1 1 2 1 H9.8 L14 5.2 V16 Q14 17 13 17 H2 Q1 17 1 16 Z" fill="#EEF0F8" stroke="#3A3A3A" stroke-width="1.9"/><path d="M9.5 1 L14 5.5 H9.5 Z" fill="#3A3A3A"/><circle cx="3.7" cy="3.6" r="0.9" fill="#3A3A3A"/><circle cx="3.7" cy="6.7" r="0.9" fill="#3A3A3A"/><circle cx="3.7" cy="9.9" r="0.9" fill="#3A3A3A"/><path d="M2.8 14.6 C6 12 9 9 12.3 7.2 L12.2 14.5 M5.5 12.3 H12" fill="none" stroke="#CC1F2E" stroke-width="1.7" stroke-linecap="round"/></svg>
<div class="a tx" style="left:1409.50px;top:418.72px;font-size:19px;line-height:19px;color:#1E1E1E;font-family:'Liberation Sans',sans-serif;font-weight:400;transform:scaleX(1.0433);">bootstrap-grid.css</div>
<svg class="a" style="left:1363.2px;top:448.8px;" width="10" height="10" viewBox="0 0 10 10"><defs><radialGradient id="gg" cx="0.38" cy="0.35" r="0.65"><stop offset="0" stop-color="#A8EC88"/><stop offset="0.5" stop-color="#36B426"/><stop offset="1" stop-color="#23701E"/></radialGradient></defs><circle cx="5" cy="5" r="4.8" fill="url(#gg)"/></svg>
<svg class="a" style="left:1381.5px;top:445px;" width="15" height="18" viewBox="0 0 15 18"><path d="M1 2 Q1 1 2 1 H9.8 L14 5.2 V16 Q14 17 13 17 H2 Q1 17 1 16 Z" fill="#EEF0F8" stroke="#3A3A3A" stroke-width="1.9"/><path d="M9.5 1 L14 5.5 H9.5 Z" fill="#3A3A3A"/><path d="M3.5 6.2 H7.3 M3.5 9.2 H11.5 M3.5 12.1 H11.5 M3.5 15 H11.5" stroke="#3A3A3A" stroke-width="1.1"/></svg>
<div class="a tx" style="left:1409.50px;top:444.72px;font-size:19px;line-height:19px;color:#1E1E1E;font-family:'Liberation Sans',sans-serif;font-weight:400;transform:scaleX(1.0391);">bootstrap-grid.css.map</div>
<svg class="a" style="left:1363.2px;top:474.8px;" width="10" height="10" viewBox="0 0 10 10"><defs><radialGradient id="gg" cx="0.38" cy="0.35" r="0.65"><stop offset="0" stop-color="#A8EC88"/><stop offset="0.5" stop-color="#36B426"/><stop offset="1" stop-color="#23701E"/></radialGradient></defs><circle cx="5" cy="5" r="4.8" fill="url(#gg)"/></svg>
<svg class="a" style="left:1381.5px;top:471px;" width="15" height="18" viewBox="0 0 15 18"><path d="M1 2 Q1 1 2 1 H9.8 L14 5.2 V16 Q14 17 13 17 H2 Q1 17 1 16 Z" fill="#EEF0F8" stroke="#3A3A3A" stroke-width="1.9"/><path d="M9.5 1 L14 5.5 H9.5 Z" fill="#3A3A3A"/><circle cx="3.7" cy="3.6" r="0.9" fill="#3A3A3A"/><circle cx="3.7" cy="6.7" r="0.9" fill="#3A3A3A"/><circle cx="3.7" cy="9.9" r="0.9" fill="#3A3A3A"/><path d="M2.8 14.6 C6 12 9 9 12.3 7.2 L12.2 14.5 M5.5 12.3 H12" fill="none" stroke="#CC1F2E" stroke-width="1.7" stroke-linecap="round"/></svg>
<div class="a tx" style="left:1409.50px;top:470.72px;font-size:19px;line-height:19px;color:#1E1E1E;font-family:'Liberation Sans',sans-serif;font-weight:400;transform:scaleX(1.0403);">bootstrap-grid.min.css</div>
<svg class="a" style="left:1363.2px;top:500.8px;" width="10" height="10" viewBox="0 0 10 10"><defs><radialGradient id="gg" cx="0.38" cy="0.35" r="0.65"><stop offset="0" stop-color="#A8EC88"/><stop offset="0.5" stop-color="#36B426"/><stop offset="1" stop-color="#23701E"/></radialGradient></defs><circle cx="5" cy="5" r="4.8" fill="url(#gg)"/></svg>
<svg class="a" style="left:1381.5px;top:497px;" width="15" height="18" viewBox="0 0 15 18"><path d="M1 2 Q1 1 2 1 H9.8 L14 5.2 V16 Q14 17 13 17 H2 Q1 17 1 16 Z" fill="#EEF0F8" stroke="#3A3A3A" stroke-width="1.9"/><path d="M9.5 1 L14 5.5 H9.5 Z" fill="#3A3A3A"/><path d="M3.5 6.2 H7.3 M3.5 9.2 H11.5 M3.5 12.1 H11.5 M3.5 15 H11.5" stroke="#3A3A3A" stroke-width="1.1"/></svg>
<div class="a tx" style="left:1409.50px;top:496.72px;font-size:19px;line-height:19px;color:#1E1E1E;font-family:'Liberation Sans',sans-serif;font-weight:400;transform:scaleX(1.0373);">bootstrap-grid.min.css.map</div>
<svg class="a" style="left:1363.2px;top:526.8px;" width="10" height="10" viewBox="0 0 10 10"><defs><radialGradient id="gg" cx="0.38" cy="0.35" r="0.65"><stop offset="0" stop-color="#A8EC88"/><stop offset="0.5" stop-color="#36B426"/><stop offset="1" stop-color="#23701E"/></radialGradient></defs><circle cx="5" cy="5" r="4.8" fill="url(#gg)"/></svg>
<svg class="a" style="left:1381.5px;top:523px;" width="15" height="18" viewBox="0 0 15 18"><path d="M1 2 Q1 1 2 1 H9.8 L14 5.2 V16 Q14 17 13 17 H2 Q1 17 1 16 Z" fill="#EEF0F8" stroke="#3A3A3A" stroke-width="1.9"/><path d="M9.5 1 L14 5.5 H9.5 Z" fill="#3A3A3A"/><circle cx="3.7" cy="3.6" r="0.9" fill="#3A3A3A"/><circle cx="3.7" cy="6.7" r="0.9" fill="#3A3A3A"/><circle cx="3.7" cy="9.9" r="0.9" fill="#3A3A3A"/><path d="M2.8 14.6 C6 12 9 9 12.3 7.2 L12.2 14.5 M5.5 12.3 H12" fill="none" stroke="#CC1F2E" stroke-width="1.7" stroke-linecap="round"/></svg>
<div class="a tx" style="left:1409.50px;top:522.72px;font-size:19px;line-height:19px;color:#1E1E1E;font-family:'Liberation Sans',sans-serif;font-weight:400;transform:scaleX(1.0497);">bootstrap-grid.rtl.css</div>
<svg class="a" style="left:1363.2px;top:552.8px;" width="10" height="10" viewBox="0 0 10 10"><defs><radialGradient id="gg" cx="0.38" cy="0.35" r="0.65"><stop offset="0" stop-color="#A8EC88"/><stop offset="0.5" stop-color="#36B426"/><stop offset="1" stop-color="#23701E"/></radialGradient></defs><circle cx="5" cy="5" r="4.8" fill="url(#gg)"/></svg>
<svg class="a" style="left:1381.5px;top:549px;" width="15" height="18" viewBox="0 0 15 18"><path d="M1 2 Q1 1 2 1 H9.8 L14 5.2 V16 Q14 17 13 17 H2 Q1 17 1 16 Z" fill="#EEF0F8" stroke="#3A3A3A" stroke-width="1.9"/><path d="M9.5 1 L14 5.5 H9.5 Z" fill="#3A3A3A"/><path d="M3.5 6.2 H7.3 M3.5 9.2 H11.5 M3.5 12.1 H11.5 M3.5 15 H11.5" stroke="#3A3A3A" stroke-width="1.1"/></svg>
<div class="a tx" style="left:1409.50px;top:548.72px;font-size:19px;line-height:19px;color:#1E1E1E;font-family:'Liberation Sans',sans-serif;font-weight:400;transform:scaleX(1.0446);">bootstrap-grid.rtl.css.map</div>
<svg class="a" style="left:1363.2px;top:578.8px;" width="10" height="10" viewBox="0 0 10 10"><defs><radialGradient id="gg" cx="0.38" cy="0.35" r="0.65"><stop offset="0" stop-color="#A8EC88"/><stop offset="0.5" stop-color="#36B426"/><stop offset="1" stop-color="#23701E"/></radialGradient></defs><circle cx="5" cy="5" r="4.8" fill="url(#gg)"/></svg>
<svg class="a" style="left:1381.5px;top:575px;" width="15" height="18" viewBox="0 0 15 18"><path d="M1 2 Q1 1 2 1 H9.8 L14 5.2 V16 Q14 17 13 17 H2 Q1 17 1 16 Z" fill="#EEF0F8" stroke="#3A3A3A" stroke-width="1.9"/><path d="M9.5 1 L14 5.5 H9.5 Z" fill="#3A3A3A"/><circle cx="3.7" cy="3.6" r="0.9" fill="#3A3A3A"/><circle cx="3.7" cy="6.7" r="0.9" fill="#3A3A3A"/><circle cx="3.7" cy="9.9" r="0.9" fill="#3A3A3A"/><path d="M2.8 14.6 C6 12 9 9 12.3 7.2 L12.2 14.5 M5.5 12.3 H12" fill="none" stroke="#CC1F2E" stroke-width="1.7" stroke-linecap="round"/></svg>
<div class="a tx" style="left:1409.50px;top:574.72px;font-size:19px;line-height:19px;color:#1E1E1E;font-family:'Liberation Sans',sans-serif;font-weight:400;transform:scaleX(1.0483);">bootstrap-grid.rtl.min.css</div>
<svg class="a" style="left:1363.2px;top:604.8px;" width="10" height="10" viewBox="0 0 10 10"><defs><radialGradient id="gg" cx="0.38" cy="0.35" r="0.65"><stop offset="0" stop-color="#A8EC88"/><stop offset="0.5" stop-color="#36B426"/><stop offset="1" stop-color="#23701E"/></radialGradient></defs><circle cx="5" cy="5" r="4.8" fill="url(#gg)"/></svg>
<svg class="a" style="left:1381.5px;top:601px;" width="15" height="18" viewBox="0 0 15 18"><path d="M1 2 Q1 1 2 1 H9.8 L14 5.2 V16 Q14 17 13 17 H2 Q1 17 1 16 Z" fill="#EEF0F8" stroke="#3A3A3A" stroke-width="1.9"/><path d="M9.5 1 L14 5.5 H9.5 Z" fill="#3A3A3A"/><path d="M3.5 6.2 H7.3 M3.5 9.2 H11.5 M3.5 12.1 H11.5 M3.5 15 H11.5" stroke="#3A3A3A" stroke-width="1.1"/></svg>
<div class="a tx" style="left:1409.50px;top:600.72px;font-size:19px;line-height:19px;color:#1E1E1E;font-family:'Liberation Sans',sans-serif;font-weight:400;transform:scaleX(1.0422);">bootstrap-grid.rtl.min.css.map</div>
<svg class="a" style="left:1363.2px;top:630.8px;" width="10" height="10" viewBox="0 0 10 10"><defs><radialGradient id="gg" cx="0.38" cy="0.35" r="0.65"><stop offset="0" stop-color="#A8EC88"/><stop offset="0.5" stop-color="#36B426"/><stop offset="1" stop-color="#23701E"/></radialGradient></defs><circle cx="5" cy="5" r="4.8" fill="url(#gg)"/></svg>
<svg class="a" style="left:1381.5px;top:627px;" width="15" height="18" viewBox="0 0 15 18"><path d="M1 2 Q1 1 2 1 H9.8 L14 5.2 V16 Q14 17 13 17 H2 Q1 17 1 16 Z" fill="#EEF0F8" stroke="#3A3A3A" stroke-width="1.9"/><path d="M9.5 1 L14 5.5 H9.5 Z" fill="#3A3A3A"/><circle cx="3.7" cy="3.6" r="0.9" fill="#3A3A3A"/><circle cx="3.7" cy="6.7" r="0.9" fill="#3A3A3A"/><circle cx="3.7" cy="9.9" r="0.9" fill="#3A3A3A"/><path d="M2.8 14.6 C6 12 9 9 12.3 7.2 L12.2 14.5 M5.5 12.3 H12" fill="none" stroke="#CC1F2E" stroke-width="1.7" stroke-linecap="round"/></svg>
<div class="a tx" style="left:1409.50px;top:626.72px;font-size:19px;line-height:19px;color:#1E1E1E;font-family:'Liberation Sans',sans-serif;font-weight:400;transform:scaleX(1.0378);">bootstrap-reboot.css</div>
<svg class="a" style="left:1363.2px;top:656.8px;" width="10" height="10" viewBox="0 0 10 10"><defs><radialGradient id="gg" cx="0.38" cy="0.35" r="0.65"><stop offset="0" stop-color="#A8EC88"/><stop offset="0.5" stop-color="#36B426"/><stop offset="1" stop-color="#23701E"/></radialGradient></defs><circle cx="5" cy="5" r="4.8" fill="url(#gg)"/></svg>
<svg class="a" style="left:1381.5px;top:653px;" width="15" height="18" viewBox="0 0 15 18"><path d="M1 2 Q1 1 2 1 H9.8 L14 5.2 V16 Q14 17 13 17 H2 Q1 17 1 16 Z" fill="#EEF0F8" stroke="#3A3A3A" stroke-width="1.9"/><path d="M9.5 1 L14 5.5 H9.5 Z" fill="#3A3A3A"/><path d="M3.5 6.2 H7.3 M3.5 9.2 H11.5 M3.5 12.1 H11.5 M3.5 15 H11.5" stroke="#3A3A3A" stroke-width="1.1"/></svg>
<div class="a tx" style="left:1409.50px;top:652.72px;font-size:19px;line-height:19px;color:#1E1E1E;font-family:'Liberation Sans',sans-serif;font-weight:400;transform:scaleX(1.0350);">bootstrap-reboot.css.map</div>
<svg class="a" style="left:1363.2px;top:682.8px;" width="10" height="10" viewBox="0 0 10 10"><defs><radialGradient id="gg" cx="0.38" cy="0.35" r="0.65"><stop offset="0" stop-color="#A8EC88"/><stop offset="0.5" stop-color="#36B426"/><stop offset="1" stop-color="#23701E"/></radialGradient></defs><circle cx="5" cy="5" r="4.8" fill="url(#gg)"/></svg>
<svg class="a" style="left:1381.5px;top:679px;" width="15" height="18" viewBox="0 0 15 18"><path d="M1 2 Q1 1 2 1 H9.8 L14 5.2 V16 Q14 17 13 17 H2 Q1 17 1 16 Z" fill="#EEF0F8" stroke="#3A3A3A" stroke-width="1.9"/><path d="M9.5 1 L14 5.5 H9.5 Z" fill="#3A3A3A"/><circle cx="3.7" cy="3.6" r="0.9" fill="#3A3A3A"/><circle cx="3.7" cy="6.7" r="0.9" fill="#3A3A3A"/><circle cx="3.7" cy="9.9" r="0.9" fill="#3A3A3A"/><path d="M2.8 14.6 C6 12 9 9 12.3 7.2 L12.2 14.5 M5.5 12.3 H12" fill="none" stroke="#CC1F2E" stroke-width="1.7" stroke-linecap="round"/></svg>
<div class="a tx" style="left:1409.50px;top:678.72px;font-size:19px;line-height:19px;color:#1E1E1E;font-family:'Liberation Sans',sans-serif;font-weight:400;transform:scaleX(1.0375);">bootstrap-reboot.min.css</div>
<svg class="a" style="left:1363.2px;top:708.8px;" width="10" height="10" viewBox="0 0 10 10"><defs><radialGradient id="gg" cx="0.38" cy="0.35" r="0.65"><stop offset="0" stop-color="#A8EC88"/><stop offset="0.5" stop-color="#36B426"/><stop offset="1" stop-color="#23701E"/></radialGradient></defs><circle cx="5" cy="5" r="4.8" fill="url(#gg)"/></svg>
<svg class="a" style="left:1381.5px;top:705px;" width="15" height="18" viewBox="0 0 15 18"><path d="M1 2 Q1 1 2 1 H9.8 L14 5.2 V16 Q14 17 13 17 H2 Q1 17 1 16 Z" fill="#EEF0F8" stroke="#3A3A3A" stroke-width="1.9"/><path d="M9.5 1 L14 5.5 H9.5 Z" fill="#3A3A3A"/><path d="M3.5 6.2 H7.3 M3.5 9.2 H11.5 M3.5 12.1 H11.5 M3.5 15 H11.5" stroke="#3A3A3A" stroke-width="1.1"/></svg>
<div class="a tx" style="left:1409.50px;top:704.72px;font-size:19px;line-height:19px;color:#1E1E1E;font-family:'Liberation Sans',sans-serif;font-weight:400;transform:scaleX(1.0352);">bootstrap-reboot.min.css.map</div>
<svg class="a" style="left:1363.2px;top:734.8px;" width="10" height="10" viewBox="0 0 10 10"><defs><radialGradient id="gg" cx="0.38" cy="0.35" r="0.65"><stop offset="0" stop-color="#A8EC88"/><stop offset="0.5" stop-color="#36B426"/><stop offset="1" stop-color="#23701E"/></radialGradient></defs><circle cx="5" cy="5" r="4.8" fill="url(#gg)"/></svg>
<svg class="a" style="left:1381.5px;top:731px;" width="15" height="18" viewBox="0 0 15 18"><path d="M1 2 Q1 1 2 1 H9.8 L14 5.2 V16 Q14 17 13 17 H2 Q1 17 1 16 Z" fill="#EEF0F8" stroke="#3A3A3A" stroke-width="1.9"/><path d="M9.5 1 L14 5.5 H9.5 Z" fill="#3A3A3A"/><circle cx="3.7" cy="3.6" r="0.9" fill="#3A3A3A"/><circle cx="3.7" cy="6.7" r="0.9" fill="#3A3A3A"/><circle cx="3.7" cy="9.9" r="0.9" fill="#3A3A3A"/><path d="M2.8 14.6 C6 12 9 9 12.3 7.2 L12.2 14.5 M5.5 12.3 H12" fill="none" stroke="#CC1F2E" stroke-width="1.7" stroke-linecap="round"/></svg>
<div class="a tx" style="left:1409.50px;top:730.72px;font-size:19px;line-height:19px;color:#1E1E1E;font-family:'Liberation Sans',sans-serif;font-weight:400;transform:scaleX(1.0456);">bootstrap-reboot.rtl.css</div>
<svg class="a" style="left:1363.2px;top:760.8px;" width="10" height="10" viewBox="0 0 10 10"><defs><radialGradient id="gg" cx="0.38" cy="0.35" r="0.65"><stop offset="0" stop-color="#A8EC88"/><stop offset="0.5" stop-color="#36B426"/><stop offset="1" stop-color="#23701E"/></radialGradient></defs><circle cx="5" cy="5" r="4.8" fill="url(#gg)"/></svg>
<svg class="a" style="left:1381.5px;top:757px;" width="15" height="18" viewBox="0 0 15 18"><path d="M1 2 Q1 1 2 1 H9.8 L14 5.2 V16 Q14 17 13 17 H2 Q1 17 1 16 Z" fill="#EEF0F8" stroke="#3A3A3A" stroke-width="1.9"/><path d="M9.5 1 L14 5.5 H9.5 Z" fill="#3A3A3A"/><path d="M3.5 6.2 H7.3 M3.5 9.2 H11.5 M3.5 12.1 H11.5 M3.5 15 H11.5" stroke="#3A3A3A" stroke-width="1.1"/></svg>
<div class="a tx" style="left:1409.50px;top:756.72px;font-size:19px;line-height:19px;color:#1E1E1E;font-family:'Liberation Sans',sans-serif;font-weight:400;transform:scaleX(1.0369);">bootstrap-reboot.rtl.css.map</div>
<svg class="a" style="left:1363.2px;top:786.8px;" width="10" height="10" viewBox="0 0 10 10"><defs><radialGradient id="gg" cx="0.38" cy="0.35" r="0.65"><stop offset="0" stop-color="#A8EC88"/><stop offset="0.5" stop-color="#36B426"/><stop offset="1" stop-color="#23701E"/></radialGradient></defs><circle cx="5" cy="5" r="4.8" fill="url(#gg)"/></svg>
<svg class="a" style="left:1381.5px;top:783px;" width="15" height="18" viewBox="0 0 15 18"><path d="M1 2 Q1 1 2 1 H9.8 L14 5.2 V16 Q14 17 13 17 H2 Q1 17 1 16 Z" fill="#EEF0F8" stroke="#3A3A3A" stroke-width="1.9"/><path d="M9.5 1 L14 5.5 H9.5 Z" fill="#3A3A3A"/><circle cx="3.7" cy="3.6" r="0.9" fill="#3A3A3A"/><circle cx="3.7" cy="6.7" r="0.9" fill="#3A3A3A"/><circle cx="3.7" cy="9.9" r="0.9" fill="#3A3A3A"/><path d="M2.8 14.6 C6 12 9 9 12.3 7.2 L12.2 14.5 M5.5 12.3 H12" fill="none" stroke="#CC1F2E" stroke-width="1.7" stroke-linecap="round"/></svg>
<div class="a tx" style="left:1409.50px;top:782.72px;font-size:19px;line-height:19px;color:#1E1E1E;font-family:'Liberation Sans',sans-serif;font-weight:400;transform:scaleX(1.0437);">bootstrap-reboot.rtl.min.css</div>
<svg class="a" style="left:1363.2px;top:812.8px;" width="10" height="10" viewBox="0 0 10 10"><defs><radialGradient id="gg" cx="0.38" cy="0.35" r="0.65"><stop offset="0" stop-color="#A8EC88"/><stop offset="0.5" stop-color="#36B426"/><stop offset="1" stop-color="#23701E"/></radialGradient></defs><circle cx="5" cy="5" r="4.8" fill="url(#gg)"/></svg>
<svg class="a" style="left:1381.5px;top:809px;" width="15" height="18" viewBox="0 0 15 18"><path d="M1 2 Q1 1 2 1 H9.8 L14 5.2 V16 Q14 17 13 17 H2 Q1 17 1 16 Z" fill="#EEF0F8" stroke="#3A3A3A" stroke-width="1.9"/><path d="M9.5 1 L14 5.5 H9.5 Z" fill="#3A3A3A"/><path d="M3.5 6.2 H7.3 M3.5 9.2 H11.5 M3.5 12.1 H11.5 M3.5 15 H11.5" stroke="#3A3A3A" stroke-width="1.1"/></svg>
<div class="a tx" style="left:1409.50px;top:808.72px;font-size:19px;line-height:19px;color:#1E1E1E;font-family:'Liberation Sans',sans-serif;font-weight:400;transform:scaleX(1.0402);">bootstrap-reboot.rtl.min.css.map</div>
<svg class="a" style="left:1363.2px;top:838.8px;" width="10" height="10" viewBox="0 0 10 10"><defs><radialGradient id="gg" cx="0.38" cy="0.35" r="0.65"><stop offset="0" stop-color="#A8EC88"/><stop offset="0.5" stop-color="#36B426"/><stop offset="1" stop-color="#23701E"/></radialGradient></defs><circle cx="5" cy="5" r="4.8" fill="url(#gg)"/></svg>
<svg class="a" style="left:1381.5px;top:835px;" width="15" height="18" viewBox="0 0 15 18"><path d="M1 2 Q1 1 2 1 H9.8 L14 5.2 V16 Q14 17 13 17 H2 Q1 17 1 16 Z" fill="#EEF0F8" stroke="#3A3A3A" stroke-width="1.9"/><path d="M9.5 1 L14 5.5 H9.5 Z" fill="#3A3A3A"/><circle cx="3.7" cy="3.6" r="0.9" fill="#3A3A3A"/><circle cx="3.7" cy="6.7" r="0.9" fill="#3A3A3A"/><circle cx="3.7" cy="9.9" r="0.9" fill="#3A3A3A"/><path d="M2.8 14.6 C6 12 9 9 12.3 7.2 L12.2 14.5 M5.5 12.3 H12" fill="none" stroke="#CC1F2E" stroke-width="1.7" stroke-linecap="round"/></svg>
<div class="a tx" style="left:1409.50px;top:834.72px;font-size:19px;line-height:19px;color:#1E1E1E;font-family:'Liberation Sans',sans-serif;font-weight:400;transform:scaleX(1.0390);">bootstrap-utilities.css</div>
<svg class="a" style="left:1363.2px;top:864.8px;" width="10" height="10" viewBox="0 0 10 10"><defs><radialGradient id="gg" cx="0.38" cy="0.35" r="0.65"><stop offset="0" stop-color="#A8EC88"/><stop offset="0.5" stop-color="#36B426"/><stop offset="1" stop-color="#23701E"/></radialGradient></defs><circle cx="5" cy="5" r="4.8" fill="url(#gg)"/></svg>
<svg class="a" style="left:1381.5px;top:861px;" width="15" height="18" viewBox="0 0 15 18"><path d="M1 2 Q1 1 2 1 H9.8 L14 5.2 V16 Q14 17 13 17 H2 Q1 17 1 16 Z" fill="#EEF0F8" stroke="#3A3A3A" stroke-width="1.9"/><path d="M9.5 1 L14 5.5 H9.5 Z" fill="#3A3A3A"/><path d="M3.5 6.2 H7.3 M3.5 9.2 H11.5 M3.5 12.1 H11.5 M3.5 15 H11.5" stroke="#3A3A3A" stroke-width="1.1"/></svg>
<div class="a tx" style="left:1409.50px;top:860.72px;font-size:19px;line-height:19px;color:#1E1E1E;font-family:'Liberation Sans',sans-serif;font-weight:400;transform:scaleX(1.0361);">bootstrap-utilities.css.map</div>
<svg class="a" style="left:1363.2px;top:890.8px;" width="10" height="10" viewBox="0 0 10 10"><defs><radialGradient id="gg" cx="0.38" cy="0.35" r="0.65"><stop offset="0" stop-color="#A8EC88"/><stop offset="0.5" stop-color="#36B426"/><stop offset="1" stop-color="#23701E"/></radialGradient></defs><circle cx="5" cy="5" r="4.8" fill="url(#gg)"/></svg>
<svg class="a" style="left:1381.5px;top:887px;" width="15" height="18" viewBox="0 0 15 18"><path d="M1 2 Q1 1 2 1 H9.8 L14 5.2 V16 Q14 17 13 17 H2 Q1 17 1 16 Z" fill="#EEF0F8" stroke="#3A3A3A" stroke-width="1.9"/><path d="M9.5 1 L14 5.5 H9.5 Z" fill="#3A3A3A"/><circle cx="3.7" cy="3.6" r="0.9" fill="#3A3A3A"/><circle cx="3.7" cy="6.7" r="0.9" fill="#3A3A3A"/><circle cx="3.7" cy="9.9" r="0.9" fill="#3A3A3A"/><path d="M2.8 14.6 C6 12 9 9 12.3 7.2 L12.2 14.5 M5.5 12.3 H12" fill="none" stroke="#CC1F2E" stroke-width="1.7" stroke-linecap="round"/></svg>
<div class="a tx" style="left:1409.50px;top:886.72px;font-size:19px;line-height:19px;color:#1E1E1E;font-family:'Liberation Sans',sans-serif;font-weight:400;transform:scaleX(1.0429);">bootstrap-utilities.min.css</div>
<svg class="a" style="left:1363.2px;top:916.8px;" width="10" height="10" viewBox="0 0 10 10"><defs><radialGradient id="gg" cx="0.38" cy="0.35" r="0.65"><stop offset="0" stop-color="#A8EC88"/><stop offset="0.5" stop-color="#36B426"/><stop offset="1" stop-color="#23701E"/></radialGradient></defs><circle cx="5" cy="5" r="4.8" fill="url(#gg)"/></svg>
<svg class="a" style="left:1381.5px;top:913px;" width="15" height="18" viewBox="0 0 15 18"><path d="M1 2 Q1 1 2 1 H9.8 L14 5.2 V16 Q14 17 13 17 H2 Q1 17 1 16 Z" fill="#EEF0F8" stroke="#3A3A3A" stroke-width="1.9"/><path d="M9.5 1 L14 5.5 H9.5 Z" fill="#3A3A3A"/><path d="M3.5 6.2 H7.3 M3.5 9.2 H11.5 M3.5 12.1 H11.5 M3.5 15 H11.5" stroke="#3A3A3A" stroke-width="1.1"/></svg>
<div class="a tx" style="left:1409.50px;top:912.72px;font-size:19px;line-height:19px;color:#1E1E1E;font-family:'Liberation Sans',sans-serif;font-weight:400;transform:scaleX(1.0341);">bootstrap-utilities.min.css.map</div>
</body></html>
